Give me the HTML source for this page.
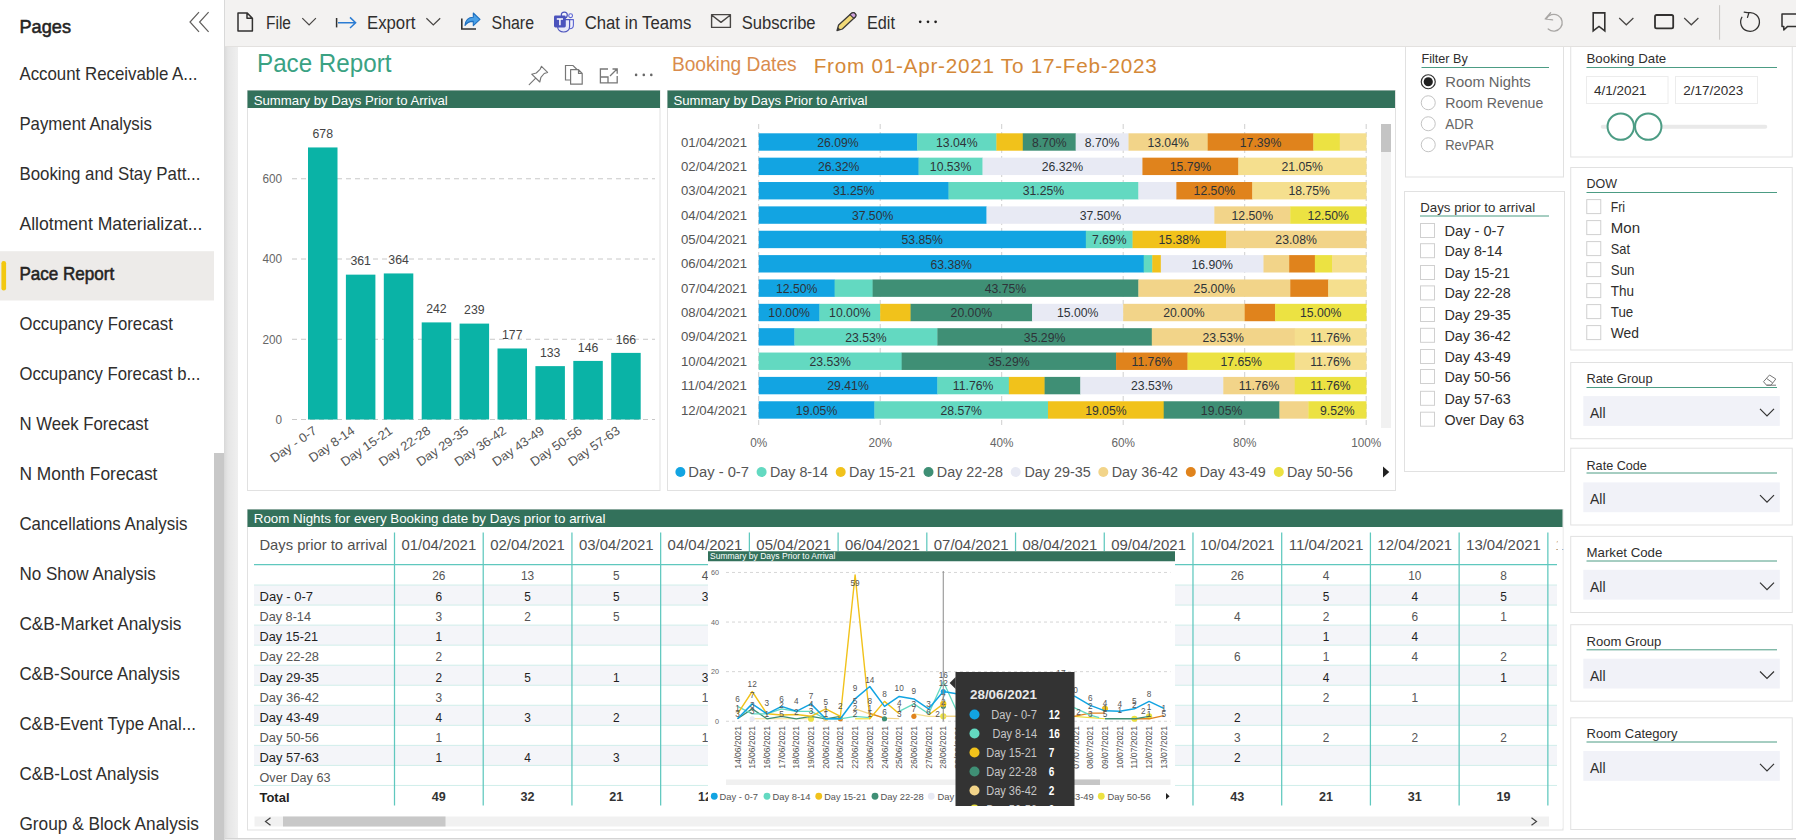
<!DOCTYPE html>
<html lang="en"><head><meta charset="utf-8"><title>Pace Report</title>
<style>
html,body{margin:0;padding:0;background:#fff;overflow:hidden}
svg{display:block;font-family:"Liberation Sans",sans-serif}
text{white-space:pre}
</style></head>
<body>
<svg width="1796" height="840" viewBox="0 0 1796 840" shape-rendering="auto">
<defs><linearGradient id="gut" x1="0" x2="1" y1="0" y2="0"><stop offset="0" stop-color="#dcdcdc"/><stop offset="0.25" stop-color="#e6e6e6"/><stop offset="1" stop-color="#efefef"/></linearGradient><clipPath id="ovl"><rect x="708" y="551" width="467" height="255"/></clipPath></defs>
<rect x="0" y="0" width="1796" height="840" fill="#ffffff"/>
<rect x="225" y="47" width="13" height="793" fill="url(#gut)"/>
<text x="257" y="72" font-size="25.5" fill="#3aa283" textLength="134.5" lengthAdjust="spacingAndGlyphs">Pace Report</text>
<text x="671.9" y="71.2" font-size="20.7" fill="#d98c4d" textLength="124.8" lengthAdjust="spacingAndGlyphs">Booking Dates</text>
<text x="813.7" y="72.7" font-size="20.7" fill="#d48838" textLength="343" lengthAdjust="spacing">From 01-Apr-2021 To 17-Feb-2023</text>
<path d="M541.5 66.3 L547.6 72.4 L544.2 73.5 L540.9 77.4 L539.8 82 L531.7 74.2 L536.3 73 L540 69.4 Z M535.7 78.1 L529.2 84.6" fill="none" stroke="#777777" stroke-width="1.15" stroke-linejoin="round" stroke-linecap="round"/>
<path d="M570.5 80 L565.5 80 L565.5 65.5 L573 65.5 L577 69.5" fill="none" stroke="#777777" stroke-width="1.2"/>
<path d="M570.6 69.7 L578.5 69.7 L582.2 73.4 L582.2 84.2 L570.6 84.2 Z M578.5 69.7 L578.5 73.4 L582.2 73.4" fill="none" stroke="#777777" stroke-width="1.2" stroke-linejoin="round"/>
<path d="M608 69 L600.4 69 L600.4 82.9 L617.2 82.9 L617.2 76 M600.4 77 L608 77 L608 82.9 M610 76 L617 69 M612.5 69 L617.2 69 L617.2 73.7" fill="none" stroke="#777777" stroke-width="1.3"/>
<circle cx="636.1" cy="74.9" r="1.3" fill="#666"/>
<circle cx="643.8" cy="74.9" r="1.3" fill="#666"/>
<circle cx="651.3" cy="74.9" r="1.3" fill="#666"/>
<rect x="247.5" y="90.5" width="412.5" height="400" fill="#ffffff" stroke="#e1e1e1" stroke-width="1"/>
<rect x="247.5" y="90.5" width="412.5" height="17.5" fill="#33715b"/>
<text x="253.75" y="104.8" font-size="13" fill="#ffffff" textLength="194" lengthAdjust="spacingAndGlyphs">Summary by Days Prior to Arrival</text>
<line x1="292" y1="419.5" x2="655" y2="419.5" stroke="#c8c8c8" stroke-width="1" stroke-dasharray="5 4"/>
<text x="282" y="423.9" font-size="12" fill="#666" text-anchor="end" textLength="6.54" lengthAdjust="spacingAndGlyphs">0</text>
<line x1="292" y1="339.25" x2="655" y2="339.25" stroke="#c8c8c8" stroke-width="1" stroke-dasharray="5 4"/>
<text x="282" y="343.65" font-size="12" fill="#666" text-anchor="end" textLength="19.62" lengthAdjust="spacingAndGlyphs">200</text>
<line x1="292" y1="259" x2="655" y2="259" stroke="#c8c8c8" stroke-width="1" stroke-dasharray="5 4"/>
<text x="282" y="263.4" font-size="12" fill="#666" text-anchor="end" textLength="19.62" lengthAdjust="spacingAndGlyphs">400</text>
<line x1="292" y1="178.75" x2="655" y2="178.75" stroke="#c8c8c8" stroke-width="1" stroke-dasharray="5 4"/>
<text x="282" y="183.15" font-size="12" fill="#666" text-anchor="end" textLength="19.62" lengthAdjust="spacingAndGlyphs">600</text>
<rect x="308" y="147.45" width="29.5" height="272.05" fill="#0ab3a6"/>
<text x="322.75" y="138.15" font-size="13" fill="#444" text-anchor="middle" textLength="20.5" lengthAdjust="spacingAndGlyphs">678</text>
<text x="317.75" y="432.5" font-size="12.6" fill="#555" text-anchor="end" textLength="53.37" lengthAdjust="spacingAndGlyphs" transform="rotate(-35 317.75 432.5)">Day - 0-7</text>
<rect x="345.9" y="274.65" width="29.5" height="144.85" fill="#0ab3a6"/>
<text x="360.65" y="265.35" font-size="13" fill="#444" text-anchor="middle" textLength="20.5" lengthAdjust="spacingAndGlyphs">361</text>
<text x="355.65" y="432.5" font-size="12.6" fill="#555" text-anchor="end" textLength="52.66" lengthAdjust="spacingAndGlyphs" transform="rotate(-35 355.65 432.5)">Day 8-14</text>
<rect x="383.8" y="273.44" width="29.5" height="146.06" fill="#0ab3a6"/>
<text x="398.55" y="264.14" font-size="13" fill="#444" text-anchor="middle" textLength="20.5" lengthAdjust="spacingAndGlyphs">364</text>
<text x="393.55" y="432.5" font-size="12.6" fill="#555" text-anchor="end" textLength="59.88" lengthAdjust="spacingAndGlyphs" transform="rotate(-35 393.55 432.5)">Day 15-21</text>
<rect x="421.7" y="322.4" width="29.5" height="97.1" fill="#0ab3a6"/>
<text x="436.45" y="313.1" font-size="13" fill="#444" text-anchor="middle" textLength="20.5" lengthAdjust="spacingAndGlyphs">242</text>
<text x="431.45" y="432.5" font-size="12.6" fill="#555" text-anchor="end" textLength="59.88" lengthAdjust="spacingAndGlyphs" transform="rotate(-35 431.45 432.5)">Day 22-28</text>
<rect x="459.6" y="323.6" width="29.5" height="95.9" fill="#0ab3a6"/>
<text x="474.35" y="314.3" font-size="13" fill="#444" text-anchor="middle" textLength="20.5" lengthAdjust="spacingAndGlyphs">239</text>
<text x="469.35" y="432.5" font-size="12.6" fill="#555" text-anchor="end" textLength="59.88" lengthAdjust="spacingAndGlyphs" transform="rotate(-35 469.35 432.5)">Day 29-35</text>
<rect x="497.5" y="348.48" width="29.5" height="71.02" fill="#0ab3a6"/>
<text x="512.25" y="339.18" font-size="13" fill="#444" text-anchor="middle" textLength="20.5" lengthAdjust="spacingAndGlyphs">177</text>
<text x="507.25" y="432.5" font-size="12.6" fill="#555" text-anchor="end" textLength="59.88" lengthAdjust="spacingAndGlyphs" transform="rotate(-35 507.25 432.5)">Day 36-42</text>
<rect x="535.4" y="366.13" width="29.5" height="53.37" fill="#0ab3a6"/>
<text x="550.15" y="356.83" font-size="13" fill="#444" text-anchor="middle" textLength="20.5" lengthAdjust="spacingAndGlyphs">133</text>
<text x="545.15" y="432.5" font-size="12.6" fill="#555" text-anchor="end" textLength="59.88" lengthAdjust="spacingAndGlyphs" transform="rotate(-35 545.15 432.5)">Day 43-49</text>
<rect x="573.3" y="360.92" width="29.5" height="58.58" fill="#0ab3a6"/>
<text x="588.05" y="351.62" font-size="13" fill="#444" text-anchor="middle" textLength="20.5" lengthAdjust="spacingAndGlyphs">146</text>
<text x="583.05" y="432.5" font-size="12.6" fill="#555" text-anchor="end" textLength="59.88" lengthAdjust="spacingAndGlyphs" transform="rotate(-35 583.05 432.5)">Day 50-56</text>
<rect x="611.2" y="352.89" width="29.5" height="66.61" fill="#0ab3a6"/>
<text x="625.95" y="343.59" font-size="13" fill="#444" text-anchor="middle" textLength="20.5" lengthAdjust="spacingAndGlyphs">166</text>
<text x="620.95" y="432.5" font-size="12.6" fill="#555" text-anchor="end" textLength="59.88" lengthAdjust="spacingAndGlyphs" transform="rotate(-35 620.95 432.5)">Day 57-63</text>
<rect x="667.5" y="90.5" width="728" height="400" fill="#ffffff" stroke="#e1e1e1" stroke-width="1"/>
<rect x="667.5" y="90.5" width="727.5" height="17.5" fill="#33715b"/>
<text x="673.5" y="104.8" font-size="13" fill="#ffffff" textLength="194" lengthAdjust="spacingAndGlyphs">Summary by Days Prior to Arrival</text>
<line x1="758.7" y1="124" x2="758.7" y2="428" stroke="#cfcfcf" stroke-width="1" stroke-dasharray="5 3"/>
<text x="758.7" y="446.7" font-size="12" fill="#666" text-anchor="middle" textLength="17" lengthAdjust="spacingAndGlyphs">0%</text>
<line x1="880.2" y1="124" x2="880.2" y2="428" stroke="#cfcfcf" stroke-width="1" stroke-dasharray="5 3"/>
<text x="880.2" y="446.7" font-size="12" fill="#666" text-anchor="middle" textLength="23.54" lengthAdjust="spacingAndGlyphs">20%</text>
<line x1="1001.7" y1="124" x2="1001.7" y2="428" stroke="#cfcfcf" stroke-width="1" stroke-dasharray="5 3"/>
<text x="1001.7" y="446.7" font-size="12" fill="#666" text-anchor="middle" textLength="23.54" lengthAdjust="spacingAndGlyphs">40%</text>
<line x1="1123.2" y1="124" x2="1123.2" y2="428" stroke="#cfcfcf" stroke-width="1" stroke-dasharray="5 3"/>
<text x="1123.2" y="446.7" font-size="12" fill="#666" text-anchor="middle" textLength="23.54" lengthAdjust="spacingAndGlyphs">60%</text>
<line x1="1244.7" y1="124" x2="1244.7" y2="428" stroke="#cfcfcf" stroke-width="1" stroke-dasharray="5 3"/>
<text x="1244.7" y="446.7" font-size="12" fill="#666" text-anchor="middle" textLength="23.54" lengthAdjust="spacingAndGlyphs">80%</text>
<line x1="1366.2" y1="124" x2="1366.2" y2="428" stroke="#cfcfcf" stroke-width="1" stroke-dasharray="5 3"/>
<text x="1366.2" y="446.7" font-size="12" fill="#666" text-anchor="middle" textLength="30.08" lengthAdjust="spacingAndGlyphs">100%</text>
<text x="681" y="146.6" font-size="13" fill="#555" textLength="66" lengthAdjust="spacingAndGlyphs">01/04/2021</text>
<rect x="758.7" y="133.3" width="158.78" height="17.4" fill="#12a4e2"/>
<text x="837.94" y="146.7" font-size="13" fill="#2e3338" text-anchor="middle" textLength="41.45" lengthAdjust="spacingAndGlyphs">26.09%</text>
<rect x="917.18" y="133.3" width="79.51" height="17.4" fill="#63d9c1"/>
<text x="956.79" y="146.7" font-size="13" fill="#2e3338" text-anchor="middle" textLength="41.45" lengthAdjust="spacingAndGlyphs">13.04%</text>
<rect x="996.39" y="133.3" width="26.72" height="17.4" fill="#f1c21b"/>
<rect x="1022.81" y="133.3" width="53.15" height="17.4" fill="#3f8f75"/>
<text x="1049.24" y="146.7" font-size="13" fill="#2e3338" text-anchor="middle" textLength="34.65" lengthAdjust="spacingAndGlyphs">8.70%</text>
<rect x="1075.66" y="133.3" width="53.15" height="17.4" fill="#e8eaf4"/>
<text x="1102.09" y="146.7" font-size="13" fill="#2e3338" text-anchor="middle" textLength="34.65" lengthAdjust="spacingAndGlyphs">8.70%</text>
<rect x="1128.51" y="133.3" width="79.51" height="17.4" fill="#f2d489"/>
<text x="1168.11" y="146.7" font-size="13" fill="#2e3338" text-anchor="middle" textLength="41.45" lengthAdjust="spacingAndGlyphs">13.04%</text>
<rect x="1207.72" y="133.3" width="105.93" height="17.4" fill="#e0831c"/>
<text x="1260.54" y="146.7" font-size="13" fill="#2e3338" text-anchor="middle" textLength="41.45" lengthAdjust="spacingAndGlyphs">17.39%</text>
<rect x="1313.35" y="133.3" width="26.72" height="17.4" fill="#ece242"/>
<rect x="1339.78" y="133.3" width="26.72" height="17.4" fill="#f5df8e"/>
<text x="681" y="170.96" font-size="13" fill="#555" textLength="66" lengthAdjust="spacingAndGlyphs">02/04/2021</text>
<rect x="758.7" y="157.66" width="160.18" height="17.4" fill="#12a4e2"/>
<text x="838.64" y="171.06" font-size="13" fill="#2e3338" text-anchor="middle" textLength="41.45" lengthAdjust="spacingAndGlyphs">26.32%</text>
<rect x="918.58" y="157.66" width="64.26" height="17.4" fill="#63d9c1"/>
<text x="950.56" y="171.06" font-size="13" fill="#2e3338" text-anchor="middle" textLength="41.45" lengthAdjust="spacingAndGlyphs">10.53%</text>
<rect x="982.54" y="157.66" width="160.18" height="17.4" fill="#e8eaf4"/>
<text x="1062.48" y="171.06" font-size="13" fill="#2e3338" text-anchor="middle" textLength="41.45" lengthAdjust="spacingAndGlyphs">26.32%</text>
<rect x="1142.42" y="157.66" width="96.21" height="17.4" fill="#e0831c"/>
<text x="1190.38" y="171.06" font-size="13" fill="#2e3338" text-anchor="middle" textLength="41.45" lengthAdjust="spacingAndGlyphs">15.79%</text>
<rect x="1238.33" y="157.66" width="128.17" height="17.4" fill="#f5df8e"/>
<text x="1302.27" y="171.06" font-size="13" fill="#2e3338" text-anchor="middle" textLength="41.45" lengthAdjust="spacingAndGlyphs">21.05%</text>
<text x="681" y="195.32" font-size="13" fill="#555" textLength="66" lengthAdjust="spacingAndGlyphs">03/04/2021</text>
<rect x="758.7" y="182.02" width="190.14" height="17.4" fill="#12a4e2"/>
<text x="853.62" y="195.42" font-size="13" fill="#2e3338" text-anchor="middle" textLength="41.45" lengthAdjust="spacingAndGlyphs">31.25%</text>
<rect x="948.54" y="182.02" width="190.14" height="17.4" fill="#63d9c1"/>
<text x="1043.47" y="195.42" font-size="13" fill="#2e3338" text-anchor="middle" textLength="41.45" lengthAdjust="spacingAndGlyphs">31.25%</text>
<rect x="1138.39" y="182.02" width="38.27" height="17.4" fill="#e8eaf4"/>
<rect x="1176.36" y="182.02" width="76.24" height="17.4" fill="#e0831c"/>
<text x="1214.33" y="195.42" font-size="13" fill="#2e3338" text-anchor="middle" textLength="41.45" lengthAdjust="spacingAndGlyphs">12.50%</text>
<rect x="1252.29" y="182.02" width="114.21" height="17.4" fill="#f5df8e"/>
<text x="1309.25" y="195.42" font-size="13" fill="#2e3338" text-anchor="middle" textLength="41.45" lengthAdjust="spacingAndGlyphs">18.75%</text>
<text x="681" y="219.68" font-size="13" fill="#555" textLength="66" lengthAdjust="spacingAndGlyphs">04/04/2021</text>
<rect x="758.7" y="206.38" width="228.11" height="17.4" fill="#12a4e2"/>
<text x="872.61" y="219.78" font-size="13" fill="#2e3338" text-anchor="middle" textLength="41.45" lengthAdjust="spacingAndGlyphs">37.50%</text>
<rect x="986.51" y="206.38" width="228.11" height="17.4" fill="#e8eaf4"/>
<text x="1100.42" y="219.78" font-size="13" fill="#2e3338" text-anchor="middle" textLength="41.45" lengthAdjust="spacingAndGlyphs">37.50%</text>
<rect x="1214.33" y="206.38" width="76.24" height="17.4" fill="#f2d489"/>
<text x="1252.29" y="219.78" font-size="13" fill="#2e3338" text-anchor="middle" textLength="41.45" lengthAdjust="spacingAndGlyphs">12.50%</text>
<rect x="1290.26" y="206.38" width="76.24" height="17.4" fill="#ece242"/>
<text x="1328.23" y="219.78" font-size="13" fill="#2e3338" text-anchor="middle" textLength="41.45" lengthAdjust="spacingAndGlyphs">12.50%</text>
<text x="681" y="244.04" font-size="13" fill="#555" textLength="66" lengthAdjust="spacingAndGlyphs">05/04/2021</text>
<rect x="758.7" y="230.74" width="327.44" height="17.4" fill="#12a4e2"/>
<text x="922.27" y="244.14" font-size="13" fill="#2e3338" text-anchor="middle" textLength="41.45" lengthAdjust="spacingAndGlyphs">53.85%</text>
<rect x="1085.84" y="230.74" width="47.02" height="17.4" fill="#63d9c1"/>
<text x="1109.2" y="244.14" font-size="13" fill="#2e3338" text-anchor="middle" textLength="34.65" lengthAdjust="spacingAndGlyphs">7.69%</text>
<rect x="1132.56" y="230.74" width="93.73" height="17.4" fill="#f1c21b"/>
<text x="1179.27" y="244.14" font-size="13" fill="#2e3338" text-anchor="middle" textLength="41.45" lengthAdjust="spacingAndGlyphs">15.38%</text>
<rect x="1225.99" y="230.74" width="140.51" height="17.4" fill="#f2d489"/>
<text x="1296.09" y="244.14" font-size="13" fill="#2e3338" text-anchor="middle" textLength="41.45" lengthAdjust="spacingAndGlyphs">23.08%</text>
<text x="681" y="268.4" font-size="13" fill="#555" textLength="66" lengthAdjust="spacingAndGlyphs">06/04/2021</text>
<rect x="758.7" y="255.1" width="385.3" height="17.4" fill="#12a4e2"/>
<text x="951.2" y="268.5" font-size="13" fill="#2e3338" text-anchor="middle" textLength="41.45" lengthAdjust="spacingAndGlyphs">63.38%</text>
<rect x="1143.7" y="255.1" width="8.86" height="17.4" fill="#63d9c1"/>
<rect x="1152.26" y="255.1" width="8.86" height="17.4" fill="#f1c21b"/>
<rect x="1160.82" y="255.1" width="102.96" height="17.4" fill="#e8eaf4"/>
<text x="1212.15" y="268.5" font-size="13" fill="#2e3338" text-anchor="middle" textLength="41.45" lengthAdjust="spacingAndGlyphs">16.90%</text>
<rect x="1263.48" y="255.1" width="25.99" height="17.4" fill="#f2d489"/>
<rect x="1289.18" y="255.1" width="25.99" height="17.4" fill="#e0831c"/>
<rect x="1314.87" y="255.1" width="17.43" height="17.4" fill="#ece242"/>
<rect x="1332" y="255.1" width="34.5" height="17.4" fill="#f5df8e"/>
<text x="681" y="292.76" font-size="13" fill="#555" textLength="66" lengthAdjust="spacingAndGlyphs">07/04/2021</text>
<rect x="758.7" y="279.46" width="76.24" height="17.4" fill="#12a4e2"/>
<text x="796.67" y="292.86" font-size="13" fill="#2e3338" text-anchor="middle" textLength="41.45" lengthAdjust="spacingAndGlyphs">12.50%</text>
<rect x="834.64" y="279.46" width="38.27" height="17.4" fill="#63d9c1"/>
<rect x="872.61" y="279.46" width="266.08" height="17.4" fill="#3f8f75"/>
<text x="1005.5" y="292.86" font-size="13" fill="#2e3338" text-anchor="middle" textLength="41.45" lengthAdjust="spacingAndGlyphs">43.75%</text>
<rect x="1138.39" y="279.46" width="152.18" height="17.4" fill="#f2d489"/>
<text x="1214.33" y="292.86" font-size="13" fill="#2e3338" text-anchor="middle" textLength="41.45" lengthAdjust="spacingAndGlyphs">25.00%</text>
<rect x="1290.26" y="279.46" width="38.27" height="17.4" fill="#e0831c"/>
<rect x="1328.23" y="279.46" width="38.27" height="17.4" fill="#f5df8e"/>
<text x="681" y="317.12" font-size="13" fill="#555" textLength="66" lengthAdjust="spacingAndGlyphs">08/04/2021</text>
<rect x="758.7" y="303.82" width="61.05" height="17.4" fill="#12a4e2"/>
<text x="789.08" y="317.22" font-size="13" fill="#2e3338" text-anchor="middle" textLength="41.45" lengthAdjust="spacingAndGlyphs">10.00%</text>
<rect x="819.45" y="303.82" width="61.05" height="17.4" fill="#63d9c1"/>
<text x="849.83" y="317.22" font-size="13" fill="#2e3338" text-anchor="middle" textLength="41.45" lengthAdjust="spacingAndGlyphs">10.00%</text>
<rect x="880.2" y="303.82" width="30.68" height="17.4" fill="#f1c21b"/>
<rect x="910.58" y="303.82" width="121.8" height="17.4" fill="#3f8f75"/>
<text x="971.33" y="317.22" font-size="13" fill="#2e3338" text-anchor="middle" textLength="41.45" lengthAdjust="spacingAndGlyphs">20.00%</text>
<rect x="1032.08" y="303.82" width="91.42" height="17.4" fill="#e8eaf4"/>
<text x="1077.64" y="317.22" font-size="13" fill="#2e3338" text-anchor="middle" textLength="41.45" lengthAdjust="spacingAndGlyphs">15.00%</text>
<rect x="1123.2" y="303.82" width="121.8" height="17.4" fill="#f2d489"/>
<text x="1183.95" y="317.22" font-size="13" fill="#2e3338" text-anchor="middle" textLength="41.45" lengthAdjust="spacingAndGlyphs">20.00%</text>
<rect x="1244.7" y="303.82" width="30.68" height="17.4" fill="#e0831c"/>
<rect x="1275.08" y="303.82" width="91.42" height="17.4" fill="#ece242"/>
<text x="1320.64" y="317.22" font-size="13" fill="#2e3338" text-anchor="middle" textLength="41.45" lengthAdjust="spacingAndGlyphs">15.00%</text>
<text x="681" y="341.48" font-size="13" fill="#555" textLength="66" lengthAdjust="spacingAndGlyphs">09/04/2021</text>
<rect x="758.7" y="328.18" width="36.02" height="17.4" fill="#12a4e2"/>
<rect x="794.42" y="328.18" width="143.26" height="17.4" fill="#63d9c1"/>
<text x="865.9" y="341.58" font-size="13" fill="#2e3338" text-anchor="middle" textLength="41.45" lengthAdjust="spacingAndGlyphs">23.53%</text>
<rect x="937.38" y="328.18" width="214.71" height="17.4" fill="#3f8f75"/>
<text x="1044.59" y="341.58" font-size="13" fill="#2e3338" text-anchor="middle" textLength="41.45" lengthAdjust="spacingAndGlyphs">35.29%</text>
<rect x="1151.79" y="328.18" width="143.26" height="17.4" fill="#f2d489"/>
<text x="1223.27" y="341.58" font-size="13" fill="#2e3338" text-anchor="middle" textLength="41.45" lengthAdjust="spacingAndGlyphs">23.53%</text>
<rect x="1294.75" y="328.18" width="71.75" height="17.4" fill="#f5df8e"/>
<text x="1330.48" y="341.58" font-size="13" fill="#2e3338" text-anchor="middle" textLength="40.54" lengthAdjust="spacingAndGlyphs">11.76%</text>
<text x="681" y="365.84" font-size="13" fill="#555" textLength="66" lengthAdjust="spacingAndGlyphs">10/04/2021</text>
<rect x="758.7" y="352.54" width="143.26" height="17.4" fill="#63d9c1"/>
<text x="830.18" y="365.94" font-size="13" fill="#2e3338" text-anchor="middle" textLength="41.45" lengthAdjust="spacingAndGlyphs">23.53%</text>
<rect x="901.66" y="352.54" width="214.71" height="17.4" fill="#3f8f75"/>
<text x="1008.86" y="365.94" font-size="13" fill="#2e3338" text-anchor="middle" textLength="41.45" lengthAdjust="spacingAndGlyphs">35.29%</text>
<rect x="1116.07" y="352.54" width="71.75" height="17.4" fill="#e0831c"/>
<text x="1151.79" y="365.94" font-size="13" fill="#2e3338" text-anchor="middle" textLength="40.54" lengthAdjust="spacingAndGlyphs">11.76%</text>
<rect x="1187.52" y="352.54" width="107.53" height="17.4" fill="#ece242"/>
<text x="1241.13" y="365.94" font-size="13" fill="#2e3338" text-anchor="middle" textLength="41.45" lengthAdjust="spacingAndGlyphs">17.65%</text>
<rect x="1294.75" y="352.54" width="71.75" height="17.4" fill="#f5df8e"/>
<text x="1330.48" y="365.94" font-size="13" fill="#2e3338" text-anchor="middle" textLength="40.54" lengthAdjust="spacingAndGlyphs">11.76%</text>
<text x="681" y="390.2" font-size="13" fill="#555" textLength="66" lengthAdjust="spacingAndGlyphs">11/04/2021</text>
<rect x="758.7" y="376.9" width="179" height="17.4" fill="#12a4e2"/>
<text x="848.05" y="390.3" font-size="13" fill="#2e3338" text-anchor="middle" textLength="41.45" lengthAdjust="spacingAndGlyphs">29.41%</text>
<rect x="937.4" y="376.9" width="71.76" height="17.4" fill="#63d9c1"/>
<text x="973.13" y="390.3" font-size="13" fill="#2e3338" text-anchor="middle" textLength="40.54" lengthAdjust="spacingAndGlyphs">11.76%</text>
<rect x="1008.86" y="376.9" width="36.03" height="17.4" fill="#f1c21b"/>
<rect x="1044.59" y="376.9" width="36.03" height="17.4" fill="#3f8f75"/>
<rect x="1080.31" y="376.9" width="143.27" height="17.4" fill="#e8eaf4"/>
<text x="1151.8" y="390.3" font-size="13" fill="#2e3338" text-anchor="middle" textLength="41.45" lengthAdjust="spacingAndGlyphs">23.53%</text>
<rect x="1223.29" y="376.9" width="71.76" height="17.4" fill="#f2d489"/>
<text x="1259.02" y="390.3" font-size="13" fill="#2e3338" text-anchor="middle" textLength="40.54" lengthAdjust="spacingAndGlyphs">11.76%</text>
<rect x="1294.74" y="376.9" width="71.76" height="17.4" fill="#ece242"/>
<text x="1330.47" y="390.3" font-size="13" fill="#2e3338" text-anchor="middle" textLength="40.54" lengthAdjust="spacingAndGlyphs">11.76%</text>
<text x="681" y="414.56" font-size="13" fill="#555" textLength="66" lengthAdjust="spacingAndGlyphs">12/04/2021</text>
<rect x="758.7" y="401.26" width="116.03" height="17.4" fill="#12a4e2"/>
<text x="816.56" y="414.66" font-size="13" fill="#2e3338" text-anchor="middle" textLength="41.45" lengthAdjust="spacingAndGlyphs">19.05%</text>
<rect x="874.43" y="401.26" width="173.86" height="17.4" fill="#63d9c1"/>
<text x="961.21" y="414.66" font-size="13" fill="#2e3338" text-anchor="middle" textLength="41.45" lengthAdjust="spacingAndGlyphs">28.57%</text>
<rect x="1047.99" y="401.26" width="116.03" height="17.4" fill="#f1c21b"/>
<text x="1105.86" y="414.66" font-size="13" fill="#2e3338" text-anchor="middle" textLength="41.45" lengthAdjust="spacingAndGlyphs">19.05%</text>
<rect x="1163.72" y="401.26" width="116.03" height="17.4" fill="#3f8f75"/>
<text x="1221.58" y="414.66" font-size="13" fill="#2e3338" text-anchor="middle" textLength="41.45" lengthAdjust="spacingAndGlyphs">19.05%</text>
<rect x="1279.45" y="401.26" width="29.22" height="17.4" fill="#f2d489"/>
<rect x="1308.37" y="401.26" width="58.13" height="17.4" fill="#ece242"/>
<text x="1337.28" y="414.66" font-size="13" fill="#2e3338" text-anchor="middle" textLength="34.65" lengthAdjust="spacingAndGlyphs">9.52%</text>
<rect x="1381" y="124" width="10" height="304" fill="#f1f1f1"/>
<rect x="1381" y="124" width="10" height="28" fill="#c4c4c4"/>
<circle cx="680.4" cy="472" r="5" fill="#12a4e2"/>
<text x="688.3" y="477" font-size="14" fill="#555" textLength="60.7" lengthAdjust="spacingAndGlyphs">Day - 0-7</text>
<circle cx="761.6" cy="472" r="5" fill="#63d9c1"/>
<text x="770" y="477" font-size="14" fill="#555" textLength="58" lengthAdjust="spacingAndGlyphs">Day 8-14</text>
<circle cx="840.7" cy="472" r="5" fill="#f1c21b"/>
<text x="849" y="477" font-size="14" fill="#555" textLength="66.4" lengthAdjust="spacingAndGlyphs">Day 15-21</text>
<circle cx="928.5" cy="472" r="5" fill="#3f8f75"/>
<text x="936.8" y="477" font-size="14" fill="#555" textLength="66.2" lengthAdjust="spacingAndGlyphs">Day 22-28</text>
<circle cx="1015.7" cy="472" r="5" fill="#e8eaf4"/>
<text x="1024.5" y="477" font-size="14" fill="#555" textLength="66.2" lengthAdjust="spacingAndGlyphs">Day 29-35</text>
<circle cx="1103.3" cy="472" r="5" fill="#f2d489"/>
<text x="1111.7" y="477" font-size="14" fill="#555" textLength="66.3" lengthAdjust="spacingAndGlyphs">Day 36-42</text>
<circle cx="1190.8" cy="472" r="5" fill="#e0831c"/>
<text x="1199.4" y="477" font-size="14" fill="#555" textLength="66.3" lengthAdjust="spacingAndGlyphs">Day 43-49</text>
<circle cx="1278.8" cy="472" r="5" fill="#ece242"/>
<text x="1287" y="477" font-size="14" fill="#555" textLength="66" lengthAdjust="spacingAndGlyphs">Day 50-56</text>
<path d="M1383 466.5 L1389.3 472 L1383 477.5 Z" fill="#222"/>
<rect x="1405.5" y="30" width="158" height="147" fill="#ffffff" stroke="#e1e1e1" stroke-width="1"/>
<text x="1421.5" y="63" font-size="13" fill="#2f2e2d" textLength="46.25" lengthAdjust="spacingAndGlyphs">Filter By</text>
<line x1="1421.5" y1="67.5" x2="1549" y2="67.5" stroke="#4c9c84" stroke-width="1"/>
<circle cx="1428.25" cy="81.75" r="7" fill="#ffffff" stroke="#333" stroke-width="1.2"/>
<circle cx="1428.25" cy="81.75" r="4.6" fill="#1f1f1f"/>
<text x="1445.25" y="87.05" font-size="15" fill="#666666" textLength="85.5" lengthAdjust="spacingAndGlyphs">Room Nights</text>
<circle cx="1428.25" cy="102.75" r="7" fill="#ffffff" stroke="#c4c4c4" stroke-width="1"/>
<text x="1445.25" y="108.05" font-size="15" fill="#666666" textLength="98" lengthAdjust="spacingAndGlyphs">Room Revenue</text>
<circle cx="1428.25" cy="123.75" r="7" fill="#ffffff" stroke="#c4c4c4" stroke-width="1"/>
<text x="1445.25" y="129.05" font-size="15" fill="#666666" textLength="28.5" lengthAdjust="spacingAndGlyphs">ADR</text>
<circle cx="1428.25" cy="144.75" r="7" fill="#ffffff" stroke="#c4c4c4" stroke-width="1"/>
<text x="1445.25" y="150.05" font-size="15" fill="#666666" textLength="48.75" lengthAdjust="spacingAndGlyphs">RevPAR</text>
<rect x="1404.5" y="191.5" width="160" height="280" fill="#ffffff" stroke="#e1e1e1" stroke-width="1"/>
<text x="1420.3" y="212" font-size="13" fill="#2f2e2d" textLength="114.8" lengthAdjust="spacingAndGlyphs">Days prior to arrival</text>
<line x1="1420" y1="216" x2="1549" y2="216" stroke="#4c9c84" stroke-width="1"/>
<rect x="1420.5" y="223.5" width="14" height="14" fill="#ffffff" stroke="#d0d0d0" stroke-width="1"/>
<text x="1444.5" y="235.9" font-size="15" fill="#2f2e2d" textLength="60" lengthAdjust="spacingAndGlyphs">Day - 0-7</text>
<rect x="1420.5" y="243.7" width="14" height="14" fill="#ffffff" stroke="#d0d0d0" stroke-width="1"/>
<text x="1444.5" y="256.1" font-size="15" fill="#2f2e2d" textLength="58" lengthAdjust="spacingAndGlyphs">Day 8-14</text>
<rect x="1420.5" y="265.5" width="14" height="14" fill="#ffffff" stroke="#d0d0d0" stroke-width="1"/>
<text x="1444.5" y="277.9" font-size="15" fill="#2f2e2d" textLength="65.5" lengthAdjust="spacingAndGlyphs">Day 15-21</text>
<rect x="1420.5" y="285.9" width="14" height="14" fill="#ffffff" stroke="#d0d0d0" stroke-width="1"/>
<text x="1444.5" y="298.3" font-size="15" fill="#2f2e2d" textLength="66.25" lengthAdjust="spacingAndGlyphs">Day 22-28</text>
<rect x="1420.5" y="307.5" width="14" height="14" fill="#ffffff" stroke="#d0d0d0" stroke-width="1"/>
<text x="1444.5" y="319.9" font-size="15" fill="#2f2e2d" textLength="66.25" lengthAdjust="spacingAndGlyphs">Day 29-35</text>
<rect x="1420.5" y="328.3" width="14" height="14" fill="#ffffff" stroke="#d0d0d0" stroke-width="1"/>
<text x="1444.5" y="340.7" font-size="15" fill="#2f2e2d" textLength="66.25" lengthAdjust="spacingAndGlyphs">Day 36-42</text>
<rect x="1420.5" y="349.5" width="14" height="14" fill="#ffffff" stroke="#d0d0d0" stroke-width="1"/>
<text x="1444.5" y="361.9" font-size="15" fill="#2f2e2d" textLength="66.25" lengthAdjust="spacingAndGlyphs">Day 43-49</text>
<rect x="1420.5" y="369.5" width="14" height="14" fill="#ffffff" stroke="#d0d0d0" stroke-width="1"/>
<text x="1444.5" y="381.9" font-size="15" fill="#2f2e2d" textLength="66.25" lengthAdjust="spacingAndGlyphs">Day 50-56</text>
<rect x="1420.5" y="391.3" width="14" height="14" fill="#ffffff" stroke="#d0d0d0" stroke-width="1"/>
<text x="1444.5" y="403.7" font-size="15" fill="#2f2e2d" textLength="66.25" lengthAdjust="spacingAndGlyphs">Day 57-63</text>
<rect x="1420.5" y="412.2" width="14" height="14" fill="#ffffff" stroke="#d0d0d0" stroke-width="1"/>
<text x="1444.5" y="424.6" font-size="15" fill="#2f2e2d" textLength="79.7" lengthAdjust="spacingAndGlyphs">Over Day 63</text>
<rect x="1570.75" y="30" width="221.5" height="127" fill="#ffffff" stroke="#e1e1e1" stroke-width="1"/>
<text x="1586.5" y="63" font-size="13" fill="#2f2e2d" textLength="79.75" lengthAdjust="spacingAndGlyphs">Booking Date</text>
<line x1="1586.5" y1="67.5" x2="1777" y2="67.5" stroke="#4c9c84" stroke-width="1"/>
<rect x="1586.5" y="76.5" width="81.5" height="27" fill="#ffffff" stroke="#ececec" stroke-width="1"/>
<rect x="1675.5" y="76.5" width="82" height="27" fill="#ffffff" stroke="#ececec" stroke-width="1"/>
<text x="1594" y="95" font-size="13" fill="#2f2e2d" textLength="52.5" lengthAdjust="spacingAndGlyphs">4/1/2021</text>
<text x="1683.25" y="95" font-size="13" fill="#2f2e2d" textLength="60" lengthAdjust="spacingAndGlyphs">2/17/2023</text>
<rect x="1600.75" y="124.75" width="166.5" height="4" fill="#e9e9e9" rx="2"/>
<circle cx="1620.75" cy="126.6" r="13.2" fill="#ffffff" stroke="#4c9c84" stroke-width="2"/>
<circle cx="1648.25" cy="126.6" r="13.2" fill="#ffffff" stroke="#4c9c84" stroke-width="2"/>
<rect x="1570.75" y="167.5" width="221.5" height="182.5" fill="#ffffff" stroke="#e1e1e1" stroke-width="1"/>
<text x="1586.5" y="188" font-size="13" fill="#2f2e2d" textLength="30.5" lengthAdjust="spacingAndGlyphs">DOW</text>
<line x1="1586.5" y1="192.5" x2="1777" y2="192.5" stroke="#4c9c84" stroke-width="1"/>
<rect x="1586.75" y="199.6" width="14" height="14" fill="#ffffff" stroke="#d0d0d0" stroke-width="1"/>
<text x="1610.75" y="212" font-size="15" fill="#2f2e2d" textLength="14.25" lengthAdjust="spacingAndGlyphs">Fri</text>
<rect x="1586.75" y="220.6" width="14" height="14" fill="#ffffff" stroke="#d0d0d0" stroke-width="1"/>
<text x="1610.75" y="233" font-size="15" fill="#2f2e2d" textLength="29.25" lengthAdjust="spacingAndGlyphs">Mon</text>
<rect x="1586.75" y="241.6" width="14" height="14" fill="#ffffff" stroke="#d0d0d0" stroke-width="1"/>
<text x="1610.75" y="254" font-size="15" fill="#2f2e2d" textLength="19.25" lengthAdjust="spacingAndGlyphs">Sat</text>
<rect x="1586.75" y="262.6" width="14" height="14" fill="#ffffff" stroke="#d0d0d0" stroke-width="1"/>
<text x="1610.75" y="275" font-size="15" fill="#2f2e2d" textLength="23.75" lengthAdjust="spacingAndGlyphs">Sun</text>
<rect x="1586.75" y="283.6" width="14" height="14" fill="#ffffff" stroke="#d0d0d0" stroke-width="1"/>
<text x="1610.75" y="296" font-size="15" fill="#2f2e2d" textLength="23.25" lengthAdjust="spacingAndGlyphs">Thu</text>
<rect x="1586.75" y="304.6" width="14" height="14" fill="#ffffff" stroke="#d0d0d0" stroke-width="1"/>
<text x="1610.75" y="317" font-size="15" fill="#2f2e2d" textLength="22.5" lengthAdjust="spacingAndGlyphs">Tue</text>
<rect x="1586.75" y="325.6" width="14" height="14" fill="#ffffff" stroke="#d0d0d0" stroke-width="1"/>
<text x="1610.75" y="338" font-size="15" fill="#2f2e2d" textLength="28.25" lengthAdjust="spacingAndGlyphs">Wed</text>
<rect x="1570.75" y="362.5" width="221.5" height="76.2" fill="#ffffff" stroke="#e1e1e1" stroke-width="1"/>
<text x="1586.5" y="383" font-size="13" fill="#2f2e2d" textLength="66" lengthAdjust="spacingAndGlyphs">Rate Group</text>
<line x1="1586.5" y1="387.5" x2="1777" y2="387.5" stroke="#4c9c84" stroke-width="1"/>
<rect x="1583.3" y="396.1" width="196.5" height="29.8" fill="#f1f2f8"/>
<text x="1590" y="418.1" font-size="15" fill="#2f2e2d" textLength="15.5" lengthAdjust="spacingAndGlyphs">All</text>
<path d="M1760 408.9 L1767 415.9 L1774 408.9" fill="none" stroke="#333" stroke-width="1.2"/>
<rect x="1570.75" y="448.2" width="221.5" height="76.8" fill="#ffffff" stroke="#e1e1e1" stroke-width="1"/>
<text x="1586.5" y="470" font-size="13" fill="#2f2e2d" textLength="60.4" lengthAdjust="spacingAndGlyphs">Rate Code</text>
<line x1="1586.5" y1="473" x2="1777" y2="473" stroke="#4c9c84" stroke-width="1"/>
<rect x="1583.3" y="482.4" width="196.5" height="29.8" fill="#f1f2f8"/>
<text x="1590" y="504.4" font-size="15" fill="#2f2e2d" textLength="15.5" lengthAdjust="spacingAndGlyphs">All</text>
<path d="M1760 495.2 L1767 502.2 L1774 495.2" fill="none" stroke="#333" stroke-width="1.2"/>
<rect x="1570.75" y="536.4" width="221.5" height="76.1" fill="#ffffff" stroke="#e1e1e1" stroke-width="1"/>
<text x="1586.5" y="556.7" font-size="13" fill="#2f2e2d" textLength="75.8" lengthAdjust="spacingAndGlyphs">Market Code</text>
<line x1="1586.5" y1="561" x2="1777" y2="561" stroke="#4c9c84" stroke-width="1"/>
<rect x="1583.3" y="569.8" width="196.5" height="29.8" fill="#f1f2f8"/>
<text x="1590" y="591.8" font-size="15" fill="#2f2e2d" textLength="15.5" lengthAdjust="spacingAndGlyphs">All</text>
<path d="M1760 582.6 L1767 589.6 L1774 582.6" fill="none" stroke="#333" stroke-width="1.2"/>
<rect x="1570.75" y="624.7" width="221.5" height="76.5" fill="#ffffff" stroke="#e1e1e1" stroke-width="1"/>
<text x="1586.5" y="645.7" font-size="13" fill="#2f2e2d" textLength="74.9" lengthAdjust="spacingAndGlyphs">Room Group</text>
<line x1="1586.5" y1="649.8" x2="1777" y2="649.8" stroke="#4c9c84" stroke-width="1"/>
<rect x="1583.3" y="658.7" width="196.5" height="29.8" fill="#f1f2f8"/>
<text x="1590" y="680.7" font-size="15" fill="#2f2e2d" textLength="15.5" lengthAdjust="spacingAndGlyphs">All</text>
<path d="M1760 671.5 L1767 678.5 L1774 671.5" fill="none" stroke="#333" stroke-width="1.2"/>
<rect x="1570.75" y="717.8" width="221.5" height="111.7" fill="#ffffff" stroke="#e1e1e1" stroke-width="1"/>
<text x="1586.5" y="738" font-size="13" fill="#2f2e2d" textLength="91.1" lengthAdjust="spacingAndGlyphs">Room Category</text>
<line x1="1586.5" y1="742" x2="1777" y2="742" stroke="#4c9c84" stroke-width="1"/>
<rect x="1583.3" y="751" width="196.5" height="29.8" fill="#f1f2f8"/>
<text x="1590" y="773" font-size="15" fill="#2f2e2d" textLength="15.5" lengthAdjust="spacingAndGlyphs">All</text>
<path d="M1760 763.8 L1767 770.8 L1774 763.8" fill="none" stroke="#333" stroke-width="1.2"/>
<path d="M1763.5 381.7 L1769.5 375 L1775.8 379 L1771 385.2 L1766.5 385.2 Z M1766.5 378.4 L1772.6 382.8 M1766.5 385.2 L1776 385.2" fill="none" stroke="#777" stroke-width="1" stroke-linejoin="round"/>
<rect x="247.5" y="509.5" width="1315.5" height="320.5" fill="#ffffff" stroke="#e1e1e1" stroke-width="1"/>
<rect x="247.5" y="509.5" width="1315" height="17.5" fill="#33715b"/>
<text x="253.75" y="523.3" font-size="13" fill="#ffffff" textLength="351.75" lengthAdjust="spacingAndGlyphs">Room Nights for every Booking date by Days prior to arrival</text>
<rect x="254" y="585.04" width="1303" height="20.04" fill="#f4f5f9"/>
<rect x="254" y="625.12" width="1303" height="20.04" fill="#f4f5f9"/>
<rect x="254" y="665.2" width="1303" height="20.04" fill="#f4f5f9"/>
<rect x="254" y="705.28" width="1303" height="20.04" fill="#f4f5f9"/>
<rect x="254" y="745.36" width="1303" height="20.04" fill="#f4f5f9"/>
<line x1="254" y1="585.04" x2="1557" y2="585.04" stroke="#d0eeea" stroke-width="1"/>
<line x1="254" y1="605.08" x2="1557" y2="605.08" stroke="#d0eeea" stroke-width="1"/>
<line x1="254" y1="625.12" x2="1557" y2="625.12" stroke="#d0eeea" stroke-width="1"/>
<line x1="254" y1="645.16" x2="1557" y2="645.16" stroke="#d0eeea" stroke-width="1"/>
<line x1="254" y1="665.2" x2="1557" y2="665.2" stroke="#d0eeea" stroke-width="1"/>
<line x1="254" y1="685.24" x2="1557" y2="685.24" stroke="#d0eeea" stroke-width="1"/>
<line x1="254" y1="705.28" x2="1557" y2="705.28" stroke="#d0eeea" stroke-width="1"/>
<line x1="254" y1="725.32" x2="1557" y2="725.32" stroke="#d0eeea" stroke-width="1"/>
<line x1="254" y1="745.36" x2="1557" y2="745.36" stroke="#d0eeea" stroke-width="1"/>
<line x1="254" y1="765.4" x2="1557" y2="765.4" stroke="#d0eeea" stroke-width="1"/>
<line x1="254" y1="785.44" x2="1557" y2="785.44" stroke="#d0eeea" stroke-width="1"/>
<line x1="254" y1="564.5" x2="1557" y2="564.5" stroke="#5fc8be" stroke-width="1.25"/>
<line x1="394.5" y1="532.5" x2="394.5" y2="805.5" stroke="#5fc8be" stroke-width="1.25"/>
<line x1="483.22" y1="532.5" x2="483.22" y2="805.5" stroke="#5fc8be" stroke-width="1.25"/>
<line x1="571.94" y1="532.5" x2="571.94" y2="805.5" stroke="#5fc8be" stroke-width="1.25"/>
<line x1="660.66" y1="532.5" x2="660.66" y2="805.5" stroke="#5fc8be" stroke-width="1.25"/>
<line x1="749.38" y1="532.5" x2="749.38" y2="805.5" stroke="#5fc8be" stroke-width="1.25"/>
<line x1="838.1" y1="532.5" x2="838.1" y2="805.5" stroke="#5fc8be" stroke-width="1.25"/>
<line x1="926.82" y1="532.5" x2="926.82" y2="805.5" stroke="#5fc8be" stroke-width="1.25"/>
<line x1="1015.54" y1="532.5" x2="1015.54" y2="805.5" stroke="#5fc8be" stroke-width="1.25"/>
<line x1="1104.26" y1="532.5" x2="1104.26" y2="805.5" stroke="#5fc8be" stroke-width="1.25"/>
<line x1="1192.98" y1="532.5" x2="1192.98" y2="805.5" stroke="#5fc8be" stroke-width="1.25"/>
<line x1="1281.7" y1="532.5" x2="1281.7" y2="805.5" stroke="#5fc8be" stroke-width="1.25"/>
<line x1="1370.42" y1="532.5" x2="1370.42" y2="805.5" stroke="#5fc8be" stroke-width="1.25"/>
<line x1="1459.14" y1="532.5" x2="1459.14" y2="805.5" stroke="#5fc8be" stroke-width="1.25"/>
<line x1="1547.86" y1="532.5" x2="1547.86" y2="805.5" stroke="#5fc8be" stroke-width="1.25"/>
<text x="259.4" y="550.1" font-size="14.6" fill="#505050" textLength="128" lengthAdjust="spacingAndGlyphs">Days prior to arrival</text>
<text x="401.46" y="550.1" font-size="14.6" fill="#505050" textLength="74.75" lengthAdjust="spacingAndGlyphs">01/04/2021</text>
<text x="438.86" y="580.2" font-size="12.5" fill="#555" text-anchor="middle" textLength="13.2" lengthAdjust="spacingAndGlyphs">26</text>
<text x="438.86" y="601.34" font-size="12.5" fill="#1f1f1f" text-anchor="middle" textLength="6.6" lengthAdjust="spacingAndGlyphs">6</text>
<text x="438.86" y="621.38" font-size="12.5" fill="#555" text-anchor="middle" textLength="6.6" lengthAdjust="spacingAndGlyphs">3</text>
<text x="438.86" y="641.42" font-size="12.5" fill="#1f1f1f" text-anchor="middle" textLength="6.6" lengthAdjust="spacingAndGlyphs">1</text>
<text x="438.86" y="661.46" font-size="12.5" fill="#555" text-anchor="middle" textLength="6.6" lengthAdjust="spacingAndGlyphs">2</text>
<text x="438.86" y="681.5" font-size="12.5" fill="#1f1f1f" text-anchor="middle" textLength="6.6" lengthAdjust="spacingAndGlyphs">2</text>
<text x="438.86" y="701.54" font-size="12.5" fill="#555" text-anchor="middle" textLength="6.6" lengthAdjust="spacingAndGlyphs">3</text>
<text x="438.86" y="721.58" font-size="12.5" fill="#1f1f1f" text-anchor="middle" textLength="6.6" lengthAdjust="spacingAndGlyphs">4</text>
<text x="438.86" y="741.62" font-size="12.5" fill="#555" text-anchor="middle" textLength="6.6" lengthAdjust="spacingAndGlyphs">1</text>
<text x="438.86" y="761.66" font-size="12.5" fill="#1f1f1f" text-anchor="middle" textLength="6.6" lengthAdjust="spacingAndGlyphs">1</text>
<text x="438.86" y="801.04" font-size="12.5" fill="#333" font-weight="700" text-anchor="middle" textLength="14" lengthAdjust="spacingAndGlyphs">49</text>
<text x="490.18" y="550.1" font-size="14.6" fill="#505050" textLength="74.75" lengthAdjust="spacingAndGlyphs">02/04/2021</text>
<text x="527.58" y="580.2" font-size="12.5" fill="#555" text-anchor="middle" textLength="13.2" lengthAdjust="spacingAndGlyphs">13</text>
<text x="527.58" y="601.34" font-size="12.5" fill="#1f1f1f" text-anchor="middle" textLength="6.6" lengthAdjust="spacingAndGlyphs">5</text>
<text x="527.58" y="621.38" font-size="12.5" fill="#555" text-anchor="middle" textLength="6.6" lengthAdjust="spacingAndGlyphs">2</text>
<text x="527.58" y="681.5" font-size="12.5" fill="#1f1f1f" text-anchor="middle" textLength="6.6" lengthAdjust="spacingAndGlyphs">5</text>
<text x="527.58" y="721.58" font-size="12.5" fill="#1f1f1f" text-anchor="middle" textLength="6.6" lengthAdjust="spacingAndGlyphs">3</text>
<text x="527.58" y="761.66" font-size="12.5" fill="#1f1f1f" text-anchor="middle" textLength="6.6" lengthAdjust="spacingAndGlyphs">4</text>
<text x="527.58" y="801.04" font-size="12.5" fill="#333" font-weight="700" text-anchor="middle" textLength="14" lengthAdjust="spacingAndGlyphs">32</text>
<text x="578.9" y="550.1" font-size="14.6" fill="#505050" textLength="74.75" lengthAdjust="spacingAndGlyphs">03/04/2021</text>
<text x="616.3" y="580.2" font-size="12.5" fill="#555" text-anchor="middle" textLength="6.6" lengthAdjust="spacingAndGlyphs">5</text>
<text x="616.3" y="601.34" font-size="12.5" fill="#1f1f1f" text-anchor="middle" textLength="6.6" lengthAdjust="spacingAndGlyphs">5</text>
<text x="616.3" y="621.38" font-size="12.5" fill="#555" text-anchor="middle" textLength="6.6" lengthAdjust="spacingAndGlyphs">5</text>
<text x="616.3" y="681.5" font-size="12.5" fill="#1f1f1f" text-anchor="middle" textLength="6.6" lengthAdjust="spacingAndGlyphs">1</text>
<text x="616.3" y="721.58" font-size="12.5" fill="#1f1f1f" text-anchor="middle" textLength="6.6" lengthAdjust="spacingAndGlyphs">2</text>
<text x="616.3" y="761.66" font-size="12.5" fill="#1f1f1f" text-anchor="middle" textLength="6.6" lengthAdjust="spacingAndGlyphs">3</text>
<text x="616.3" y="801.04" font-size="12.5" fill="#333" font-weight="700" text-anchor="middle" textLength="14" lengthAdjust="spacingAndGlyphs">21</text>
<text x="667.62" y="550.1" font-size="14.6" fill="#505050" textLength="74.75" lengthAdjust="spacingAndGlyphs">04/04/2021</text>
<text x="705.02" y="580.2" font-size="12.5" fill="#555" text-anchor="middle" textLength="6.6" lengthAdjust="spacingAndGlyphs">4</text>
<text x="705.02" y="601.34" font-size="12.5" fill="#1f1f1f" text-anchor="middle" textLength="6.6" lengthAdjust="spacingAndGlyphs">3</text>
<text x="705.02" y="681.5" font-size="12.5" fill="#1f1f1f" text-anchor="middle" textLength="6.6" lengthAdjust="spacingAndGlyphs">3</text>
<text x="705.02" y="701.54" font-size="12.5" fill="#555" text-anchor="middle" textLength="6.6" lengthAdjust="spacingAndGlyphs">1</text>
<text x="705.02" y="741.62" font-size="12.5" fill="#555" text-anchor="middle" textLength="6.6" lengthAdjust="spacingAndGlyphs">1</text>
<text x="705.02" y="801.04" font-size="12.5" fill="#333" font-weight="700" text-anchor="middle" textLength="14" lengthAdjust="spacingAndGlyphs">12</text>
<text x="756.34" y="550.1" font-size="14.6" fill="#505050" textLength="74.75" lengthAdjust="spacingAndGlyphs">05/04/2021</text>
<text x="793.74" y="580.2" font-size="12.5" fill="#555" text-anchor="middle" textLength="13.2" lengthAdjust="spacingAndGlyphs">13</text>
<text x="793.74" y="601.34" font-size="12.5" fill="#1f1f1f" text-anchor="middle" textLength="6.6" lengthAdjust="spacingAndGlyphs">7</text>
<text x="793.74" y="621.38" font-size="12.5" fill="#555" text-anchor="middle" textLength="6.6" lengthAdjust="spacingAndGlyphs">1</text>
<text x="793.74" y="641.42" font-size="12.5" fill="#1f1f1f" text-anchor="middle" textLength="6.6" lengthAdjust="spacingAndGlyphs">2</text>
<text x="793.74" y="701.54" font-size="12.5" fill="#555" text-anchor="middle" textLength="6.6" lengthAdjust="spacingAndGlyphs">3</text>
<text x="793.74" y="801.04" font-size="12.5" fill="#333" font-weight="700" text-anchor="middle" textLength="14" lengthAdjust="spacingAndGlyphs">26</text>
<text x="845.06" y="550.1" font-size="14.6" fill="#505050" textLength="74.75" lengthAdjust="spacingAndGlyphs">06/04/2021</text>
<text x="882.46" y="580.2" font-size="12.5" fill="#555" text-anchor="middle" textLength="13.2" lengthAdjust="spacingAndGlyphs">71</text>
<text x="882.46" y="601.34" font-size="12.5" fill="#1f1f1f" text-anchor="middle" textLength="13.2" lengthAdjust="spacingAndGlyphs">45</text>
<text x="882.46" y="621.38" font-size="12.5" fill="#555" text-anchor="middle" textLength="6.6" lengthAdjust="spacingAndGlyphs">1</text>
<text x="882.46" y="641.42" font-size="12.5" fill="#1f1f1f" text-anchor="middle" textLength="6.6" lengthAdjust="spacingAndGlyphs">1</text>
<text x="882.46" y="681.5" font-size="12.5" fill="#1f1f1f" text-anchor="middle" textLength="13.2" lengthAdjust="spacingAndGlyphs">12</text>
<text x="882.46" y="701.54" font-size="12.5" fill="#555" text-anchor="middle" textLength="6.6" lengthAdjust="spacingAndGlyphs">3</text>
<text x="882.46" y="721.58" font-size="12.5" fill="#1f1f1f" text-anchor="middle" textLength="6.6" lengthAdjust="spacingAndGlyphs">3</text>
<text x="882.46" y="741.62" font-size="12.5" fill="#555" text-anchor="middle" textLength="6.6" lengthAdjust="spacingAndGlyphs">2</text>
<text x="882.46" y="761.66" font-size="12.5" fill="#1f1f1f" text-anchor="middle" textLength="6.6" lengthAdjust="spacingAndGlyphs">4</text>
<text x="882.46" y="801.04" font-size="12.5" fill="#333" font-weight="700" text-anchor="middle" textLength="21" lengthAdjust="spacingAndGlyphs">142</text>
<text x="933.78" y="550.1" font-size="14.6" fill="#505050" textLength="74.75" lengthAdjust="spacingAndGlyphs">07/04/2021</text>
<text x="971.18" y="580.2" font-size="12.5" fill="#555" text-anchor="middle" textLength="13.2" lengthAdjust="spacingAndGlyphs">16</text>
<text x="971.18" y="601.34" font-size="12.5" fill="#1f1f1f" text-anchor="middle" textLength="6.6" lengthAdjust="spacingAndGlyphs">2</text>
<text x="971.18" y="621.38" font-size="12.5" fill="#555" text-anchor="middle" textLength="6.6" lengthAdjust="spacingAndGlyphs">1</text>
<text x="971.18" y="661.46" font-size="12.5" fill="#555" text-anchor="middle" textLength="6.6" lengthAdjust="spacingAndGlyphs">7</text>
<text x="971.18" y="701.54" font-size="12.5" fill="#555" text-anchor="middle" textLength="6.6" lengthAdjust="spacingAndGlyphs">4</text>
<text x="971.18" y="721.58" font-size="12.5" fill="#1f1f1f" text-anchor="middle" textLength="6.6" lengthAdjust="spacingAndGlyphs">1</text>
<text x="971.18" y="761.66" font-size="12.5" fill="#1f1f1f" text-anchor="middle" textLength="6.6" lengthAdjust="spacingAndGlyphs">1</text>
<text x="971.18" y="801.04" font-size="12.5" fill="#333" font-weight="700" text-anchor="middle" textLength="14" lengthAdjust="spacingAndGlyphs">32</text>
<text x="1022.5" y="550.1" font-size="14.6" fill="#505050" textLength="74.75" lengthAdjust="spacingAndGlyphs">08/04/2021</text>
<text x="1059.9" y="580.2" font-size="12.5" fill="#555" text-anchor="middle" textLength="13.2" lengthAdjust="spacingAndGlyphs">20</text>
<text x="1059.9" y="601.34" font-size="12.5" fill="#1f1f1f" text-anchor="middle" textLength="6.6" lengthAdjust="spacingAndGlyphs">2</text>
<text x="1059.9" y="621.38" font-size="12.5" fill="#555" text-anchor="middle" textLength="6.6" lengthAdjust="spacingAndGlyphs">2</text>
<text x="1059.9" y="641.42" font-size="12.5" fill="#1f1f1f" text-anchor="middle" textLength="6.6" lengthAdjust="spacingAndGlyphs">1</text>
<text x="1059.9" y="661.46" font-size="12.5" fill="#555" text-anchor="middle" textLength="6.6" lengthAdjust="spacingAndGlyphs">4</text>
<text x="1059.9" y="681.5" font-size="12.5" fill="#1f1f1f" text-anchor="middle" textLength="6.6" lengthAdjust="spacingAndGlyphs">3</text>
<text x="1059.9" y="701.54" font-size="12.5" fill="#555" text-anchor="middle" textLength="6.6" lengthAdjust="spacingAndGlyphs">4</text>
<text x="1059.9" y="721.58" font-size="12.5" fill="#1f1f1f" text-anchor="middle" textLength="6.6" lengthAdjust="spacingAndGlyphs">1</text>
<text x="1059.9" y="741.62" font-size="12.5" fill="#555" text-anchor="middle" textLength="6.6" lengthAdjust="spacingAndGlyphs">3</text>
<text x="1059.9" y="801.04" font-size="12.5" fill="#333" font-weight="700" text-anchor="middle" textLength="14" lengthAdjust="spacingAndGlyphs">40</text>
<text x="1111.22" y="550.1" font-size="14.6" fill="#505050" textLength="74.75" lengthAdjust="spacingAndGlyphs">09/04/2021</text>
<text x="1148.62" y="580.2" font-size="12.5" fill="#555" text-anchor="middle" textLength="13.2" lengthAdjust="spacingAndGlyphs">17</text>
<text x="1148.62" y="601.34" font-size="12.5" fill="#1f1f1f" text-anchor="middle" textLength="6.6" lengthAdjust="spacingAndGlyphs">1</text>
<text x="1148.62" y="621.38" font-size="12.5" fill="#555" text-anchor="middle" textLength="6.6" lengthAdjust="spacingAndGlyphs">4</text>
<text x="1148.62" y="661.46" font-size="12.5" fill="#555" text-anchor="middle" textLength="6.6" lengthAdjust="spacingAndGlyphs">6</text>
<text x="1148.62" y="701.54" font-size="12.5" fill="#555" text-anchor="middle" textLength="6.6" lengthAdjust="spacingAndGlyphs">4</text>
<text x="1148.62" y="761.66" font-size="12.5" fill="#1f1f1f" text-anchor="middle" textLength="6.6" lengthAdjust="spacingAndGlyphs">2</text>
<text x="1148.62" y="801.04" font-size="12.5" fill="#333" font-weight="700" text-anchor="middle" textLength="14" lengthAdjust="spacingAndGlyphs">34</text>
<text x="1199.94" y="550.1" font-size="14.6" fill="#505050" textLength="74.75" lengthAdjust="spacingAndGlyphs">10/04/2021</text>
<text x="1237.34" y="580.2" font-size="12.5" fill="#555" text-anchor="middle" textLength="13.2" lengthAdjust="spacingAndGlyphs">26</text>
<text x="1237.34" y="621.38" font-size="12.5" fill="#555" text-anchor="middle" textLength="6.6" lengthAdjust="spacingAndGlyphs">4</text>
<text x="1237.34" y="661.46" font-size="12.5" fill="#555" text-anchor="middle" textLength="6.6" lengthAdjust="spacingAndGlyphs">6</text>
<text x="1237.34" y="721.58" font-size="12.5" fill="#1f1f1f" text-anchor="middle" textLength="6.6" lengthAdjust="spacingAndGlyphs">2</text>
<text x="1237.34" y="741.62" font-size="12.5" fill="#555" text-anchor="middle" textLength="6.6" lengthAdjust="spacingAndGlyphs">3</text>
<text x="1237.34" y="761.66" font-size="12.5" fill="#1f1f1f" text-anchor="middle" textLength="6.6" lengthAdjust="spacingAndGlyphs">2</text>
<text x="1237.34" y="801.04" font-size="12.5" fill="#333" font-weight="700" text-anchor="middle" textLength="14" lengthAdjust="spacingAndGlyphs">43</text>
<text x="1288.66" y="550.1" font-size="14.6" fill="#505050" textLength="74.75" lengthAdjust="spacingAndGlyphs">11/04/2021</text>
<text x="1326.06" y="580.2" font-size="12.5" fill="#555" text-anchor="middle" textLength="6.6" lengthAdjust="spacingAndGlyphs">4</text>
<text x="1326.06" y="601.34" font-size="12.5" fill="#1f1f1f" text-anchor="middle" textLength="6.6" lengthAdjust="spacingAndGlyphs">5</text>
<text x="1326.06" y="621.38" font-size="12.5" fill="#555" text-anchor="middle" textLength="6.6" lengthAdjust="spacingAndGlyphs">2</text>
<text x="1326.06" y="641.42" font-size="12.5" fill="#1f1f1f" text-anchor="middle" textLength="6.6" lengthAdjust="spacingAndGlyphs">1</text>
<text x="1326.06" y="661.46" font-size="12.5" fill="#555" text-anchor="middle" textLength="6.6" lengthAdjust="spacingAndGlyphs">1</text>
<text x="1326.06" y="681.5" font-size="12.5" fill="#1f1f1f" text-anchor="middle" textLength="6.6" lengthAdjust="spacingAndGlyphs">4</text>
<text x="1326.06" y="701.54" font-size="12.5" fill="#555" text-anchor="middle" textLength="6.6" lengthAdjust="spacingAndGlyphs">2</text>
<text x="1326.06" y="741.62" font-size="12.5" fill="#555" text-anchor="middle" textLength="6.6" lengthAdjust="spacingAndGlyphs">2</text>
<text x="1326.06" y="801.04" font-size="12.5" fill="#333" font-weight="700" text-anchor="middle" textLength="14" lengthAdjust="spacingAndGlyphs">21</text>
<text x="1377.38" y="550.1" font-size="14.6" fill="#505050" textLength="74.75" lengthAdjust="spacingAndGlyphs">12/04/2021</text>
<text x="1414.78" y="580.2" font-size="12.5" fill="#555" text-anchor="middle" textLength="13.2" lengthAdjust="spacingAndGlyphs">10</text>
<text x="1414.78" y="601.34" font-size="12.5" fill="#1f1f1f" text-anchor="middle" textLength="6.6" lengthAdjust="spacingAndGlyphs">4</text>
<text x="1414.78" y="621.38" font-size="12.5" fill="#555" text-anchor="middle" textLength="6.6" lengthAdjust="spacingAndGlyphs">6</text>
<text x="1414.78" y="641.42" font-size="12.5" fill="#1f1f1f" text-anchor="middle" textLength="6.6" lengthAdjust="spacingAndGlyphs">4</text>
<text x="1414.78" y="661.46" font-size="12.5" fill="#555" text-anchor="middle" textLength="6.6" lengthAdjust="spacingAndGlyphs">4</text>
<text x="1414.78" y="701.54" font-size="12.5" fill="#555" text-anchor="middle" textLength="6.6" lengthAdjust="spacingAndGlyphs">1</text>
<text x="1414.78" y="741.62" font-size="12.5" fill="#555" text-anchor="middle" textLength="6.6" lengthAdjust="spacingAndGlyphs">2</text>
<text x="1414.78" y="801.04" font-size="12.5" fill="#333" font-weight="700" text-anchor="middle" textLength="14" lengthAdjust="spacingAndGlyphs">31</text>
<text x="1466.1" y="550.1" font-size="14.6" fill="#505050" textLength="74.75" lengthAdjust="spacingAndGlyphs">13/04/2021</text>
<text x="1503.5" y="580.2" font-size="12.5" fill="#555" text-anchor="middle" textLength="6.6" lengthAdjust="spacingAndGlyphs">8</text>
<text x="1503.5" y="601.34" font-size="12.5" fill="#1f1f1f" text-anchor="middle" textLength="6.6" lengthAdjust="spacingAndGlyphs">5</text>
<text x="1503.5" y="621.38" font-size="12.5" fill="#555" text-anchor="middle" textLength="6.6" lengthAdjust="spacingAndGlyphs">1</text>
<text x="1503.5" y="661.46" font-size="12.5" fill="#555" text-anchor="middle" textLength="6.6" lengthAdjust="spacingAndGlyphs">2</text>
<text x="1503.5" y="681.5" font-size="12.5" fill="#1f1f1f" text-anchor="middle" textLength="6.6" lengthAdjust="spacingAndGlyphs">1</text>
<text x="1503.5" y="741.62" font-size="12.5" fill="#555" text-anchor="middle" textLength="6.6" lengthAdjust="spacingAndGlyphs">2</text>
<text x="1503.5" y="801.04" font-size="12.5" fill="#333" font-weight="700" text-anchor="middle" textLength="14" lengthAdjust="spacingAndGlyphs">19</text>
<text x="1555.6" y="550.1" font-size="14.6" fill="#555">1</text>
<text x="259.5" y="601.34" font-size="12.8" fill="#1f1f1f" textLength="53.5" lengthAdjust="spacingAndGlyphs">Day - 0-7</text>
<text x="259.5" y="621.38" font-size="12.8" fill="#555" textLength="51.5" lengthAdjust="spacingAndGlyphs">Day 8-14</text>
<text x="259.5" y="641.42" font-size="12.8" fill="#1f1f1f" textLength="58.5" lengthAdjust="spacingAndGlyphs">Day 15-21</text>
<text x="259.5" y="661.46" font-size="12.8" fill="#555" textLength="59.5" lengthAdjust="spacingAndGlyphs">Day 22-28</text>
<text x="259.5" y="681.5" font-size="12.8" fill="#1f1f1f" textLength="59.5" lengthAdjust="spacingAndGlyphs">Day 29-35</text>
<text x="259.5" y="701.54" font-size="12.8" fill="#555" textLength="59.5" lengthAdjust="spacingAndGlyphs">Day 36-42</text>
<text x="259.5" y="721.58" font-size="12.8" fill="#1f1f1f" textLength="59.5" lengthAdjust="spacingAndGlyphs">Day 43-49</text>
<text x="259.5" y="741.62" font-size="12.8" fill="#555" textLength="59.5" lengthAdjust="spacingAndGlyphs">Day 50-56</text>
<text x="259.5" y="761.66" font-size="12.8" fill="#1f1f1f" textLength="59.5" lengthAdjust="spacingAndGlyphs">Day 57-63</text>
<text x="259.5" y="781.7" font-size="12.8" fill="#555" textLength="71" lengthAdjust="spacingAndGlyphs">Over Day 63</text>
<text x="259.5" y="801.64" font-size="13" fill="#1f1f1f" font-weight="700" textLength="30" lengthAdjust="spacingAndGlyphs">Total</text>
<rect x="1557.5" y="528" width="5" height="300" fill="#ffffff"/>
<rect x="254.5" y="816.5" width="1294.5" height="10" fill="#f1f1f1"/>
<rect x="283" y="816.5" width="162.5" height="10" fill="#c8c8c8"/>
<path d="M270.5 817.8 L265.5 821.5 L270.5 825.2" fill="none" stroke="#444" stroke-width="1.2"/>
<path d="M1531.5 817.8 L1536.5 821.5 L1531.5 825.2" fill="none" stroke="#444" stroke-width="1.2"/>
<g clip-path="url(#ovl)">
<rect x="708" y="551" width="467" height="255" fill="#ffffff"/>
<rect x="708" y="551.25" width="467" height="10" fill="#33715b"/>
<text x="710" y="559" font-size="8.5" fill="#ffffff" textLength="125.5" lengthAdjust="spacingAndGlyphs">Summary by Days Prior to Arrival</text>
<line x1="726" y1="721.25" x2="1170.5" y2="721.25" stroke="#d6d6d6" stroke-width="1" stroke-dasharray="3 3"/>
<text x="719" y="723.85" font-size="7.2" fill="#666" text-anchor="end">0</text>
<line x1="726" y1="671.65" x2="1170.5" y2="671.65" stroke="#d6d6d6" stroke-width="1" stroke-dasharray="3 3"/>
<text x="719" y="674.25" font-size="7.2" fill="#666" text-anchor="end">20</text>
<line x1="726" y1="622.05" x2="1170.5" y2="622.05" stroke="#d6d6d6" stroke-width="1" stroke-dasharray="3 3"/>
<text x="719" y="624.65" font-size="7.2" fill="#666" text-anchor="end">40</text>
<line x1="726" y1="572.45" x2="1170.5" y2="572.45" stroke="#d6d6d6" stroke-width="1" stroke-dasharray="3 3"/>
<text x="719" y="575.05" font-size="7.2" fill="#666" text-anchor="end">60</text>
<text x="740.5" y="726" font-size="8.6" fill="#555" text-anchor="end" textLength="42.75" lengthAdjust="spacingAndGlyphs" transform="rotate(-90 740.5 726)">14/06/2021</text>
<text x="755.2" y="726" font-size="8.6" fill="#555" text-anchor="end" textLength="42.75" lengthAdjust="spacingAndGlyphs" transform="rotate(-90 755.2 726)">15/06/2021</text>
<text x="769.9" y="726" font-size="8.6" fill="#555" text-anchor="end" textLength="42.75" lengthAdjust="spacingAndGlyphs" transform="rotate(-90 769.9 726)">16/06/2021</text>
<text x="784.6" y="726" font-size="8.6" fill="#555" text-anchor="end" textLength="42.75" lengthAdjust="spacingAndGlyphs" transform="rotate(-90 784.6 726)">17/06/2021</text>
<text x="799.3" y="726" font-size="8.6" fill="#555" text-anchor="end" textLength="42.75" lengthAdjust="spacingAndGlyphs" transform="rotate(-90 799.3 726)">18/06/2021</text>
<text x="814" y="726" font-size="8.6" fill="#555" text-anchor="end" textLength="42.75" lengthAdjust="spacingAndGlyphs" transform="rotate(-90 814 726)">19/06/2021</text>
<text x="828.7" y="726" font-size="8.6" fill="#555" text-anchor="end" textLength="42.75" lengthAdjust="spacingAndGlyphs" transform="rotate(-90 828.7 726)">20/06/2021</text>
<text x="843.4" y="726" font-size="8.6" fill="#555" text-anchor="end" textLength="42.75" lengthAdjust="spacingAndGlyphs" transform="rotate(-90 843.4 726)">21/06/2021</text>
<text x="858.1" y="726" font-size="8.6" fill="#555" text-anchor="end" textLength="42.75" lengthAdjust="spacingAndGlyphs" transform="rotate(-90 858.1 726)">22/06/2021</text>
<text x="872.8" y="726" font-size="8.6" fill="#555" text-anchor="end" textLength="42.75" lengthAdjust="spacingAndGlyphs" transform="rotate(-90 872.8 726)">23/06/2021</text>
<text x="887.5" y="726" font-size="8.6" fill="#555" text-anchor="end" textLength="42.75" lengthAdjust="spacingAndGlyphs" transform="rotate(-90 887.5 726)">24/06/2021</text>
<text x="902.2" y="726" font-size="8.6" fill="#555" text-anchor="end" textLength="42.75" lengthAdjust="spacingAndGlyphs" transform="rotate(-90 902.2 726)">25/06/2021</text>
<text x="916.9" y="726" font-size="8.6" fill="#555" text-anchor="end" textLength="42.75" lengthAdjust="spacingAndGlyphs" transform="rotate(-90 916.9 726)">26/06/2021</text>
<text x="931.6" y="726" font-size="8.6" fill="#555" text-anchor="end" textLength="42.75" lengthAdjust="spacingAndGlyphs" transform="rotate(-90 931.6 726)">27/06/2021</text>
<text x="946.3" y="726" font-size="8.6" fill="#555" text-anchor="end" textLength="42.75" lengthAdjust="spacingAndGlyphs" transform="rotate(-90 946.3 726)">28/06/2021</text>
<text x="961" y="726" font-size="8.6" fill="#555" text-anchor="end" textLength="42.75" lengthAdjust="spacingAndGlyphs" transform="rotate(-90 961 726)">29/06/2021</text>
<text x="975.7" y="726" font-size="8.6" fill="#555" text-anchor="end" textLength="42.75" lengthAdjust="spacingAndGlyphs" transform="rotate(-90 975.7 726)">30/06/2021</text>
<text x="990.4" y="726" font-size="8.6" fill="#555" text-anchor="end" textLength="42.75" lengthAdjust="spacingAndGlyphs" transform="rotate(-90 990.4 726)">01/07/2021</text>
<text x="1005.1" y="726" font-size="8.6" fill="#555" text-anchor="end" textLength="42.75" lengthAdjust="spacingAndGlyphs" transform="rotate(-90 1005.1 726)">02/07/2021</text>
<text x="1019.8" y="726" font-size="8.6" fill="#555" text-anchor="end" textLength="42.75" lengthAdjust="spacingAndGlyphs" transform="rotate(-90 1019.8 726)">03/07/2021</text>
<text x="1034.5" y="726" font-size="8.6" fill="#555" text-anchor="end" textLength="42.75" lengthAdjust="spacingAndGlyphs" transform="rotate(-90 1034.5 726)">04/07/2021</text>
<text x="1049.2" y="726" font-size="8.6" fill="#555" text-anchor="end" textLength="42.75" lengthAdjust="spacingAndGlyphs" transform="rotate(-90 1049.2 726)">05/07/2021</text>
<text x="1063.9" y="726" font-size="8.6" fill="#555" text-anchor="end" textLength="42.75" lengthAdjust="spacingAndGlyphs" transform="rotate(-90 1063.9 726)">06/07/2021</text>
<text x="1078.6" y="726" font-size="8.6" fill="#555" text-anchor="end" textLength="42.75" lengthAdjust="spacingAndGlyphs" transform="rotate(-90 1078.6 726)">07/07/2021</text>
<text x="1093.3" y="726" font-size="8.6" fill="#555" text-anchor="end" textLength="42.75" lengthAdjust="spacingAndGlyphs" transform="rotate(-90 1093.3 726)">08/07/2021</text>
<text x="1108" y="726" font-size="8.6" fill="#555" text-anchor="end" textLength="42.75" lengthAdjust="spacingAndGlyphs" transform="rotate(-90 1108 726)">09/07/2021</text>
<text x="1122.7" y="726" font-size="8.6" fill="#555" text-anchor="end" textLength="42.75" lengthAdjust="spacingAndGlyphs" transform="rotate(-90 1122.7 726)">10/07/2021</text>
<text x="1137.4" y="726" font-size="8.6" fill="#555" text-anchor="end" textLength="42.75" lengthAdjust="spacingAndGlyphs" transform="rotate(-90 1137.4 726)">11/07/2021</text>
<text x="1152.1" y="726" font-size="8.6" fill="#555" text-anchor="end" textLength="42.75" lengthAdjust="spacingAndGlyphs" transform="rotate(-90 1152.1 726)">12/07/2021</text>
<text x="1166.8" y="726" font-size="8.6" fill="#555" text-anchor="end" textLength="42.75" lengthAdjust="spacingAndGlyphs" transform="rotate(-90 1166.8 726)">13/07/2021</text>
<path d="M752.2 718.77 L766.9 718.77 L781.6 718.77 L796.3 718.77 L811 718.77" fill="none" stroke="#f5df8e" stroke-width="1.2" stroke-linejoin="round"/>
<path d="M913.9 713.81 L928.6 716.29 L943.3 716.29 L958 716.29" fill="none" stroke="#f5df8e" stroke-width="1.2" stroke-linejoin="round"/>
<path d="M855.1 718.77 L869.8 718.77" fill="none" stroke="#ece242" stroke-width="1.2" stroke-linejoin="round"/>
<circle cx="811" cy="718.77" r="3.1" fill="#ece242"/>
<circle cx="943.3" cy="716.29" r="3.1" fill="#ece242"/>
<path d="M1074.13 716.29 L1090.3 717.53 L1105 718.77" fill="none" stroke="#ece242" stroke-width="1.2" stroke-linejoin="round"/>
<circle cx="1134.4" cy="718.77" r="3.1" fill="#ece242"/>
<circle cx="1149.1" cy="716.29" r="3.1" fill="#ece242"/>
<path d="M855.1 708.85 L869.8 713.81 L884.5 718.03 L899.2 718.77" fill="none" stroke="#f2d489" stroke-width="1.2" stroke-linejoin="round"/>
<circle cx="825.7" cy="718.77" r="2.6" fill="#f2d489"/>
<path d="M943.3 716.29 L958 716.29" fill="none" stroke="#f2d489" stroke-width="1.2" stroke-linejoin="round"/>
<path d="M869.8 713.31 L884.5 718.03" fill="none" stroke="#e0831c" stroke-width="1.3" stroke-linejoin="round"/>
<circle cx="840.4" cy="718.77" r="2.6" fill="#e0831c"/>
<circle cx="913.9" cy="716.29" r="2.6" fill="#e0831c"/>
<path d="M1074.13 716.29 L1090.3 713.07 L1105 713.07" fill="none" stroke="#e0831c" stroke-width="1.3" stroke-linejoin="round"/>
<path d="M1134.4 718.77 L1149.1 718.77 L1163.8 715.55" fill="none" stroke="#e0831c" stroke-width="1.3" stroke-linejoin="round"/>
<path d="M737.5 718.77 L752.2 708.85 L766.9 718.77 L781.6 716.29 L796.3 718.77 L811 716.29 L825.7 718.77 L840.4 716.29" fill="none" stroke="#3f8f75" stroke-width="1.3" stroke-linejoin="round"/>
<circle cx="884.5" cy="718.77" r="2.6" fill="#3f8f75"/>
<circle cx="943.3" cy="706.37" r="2.6" fill="#3f8f75"/>
<path d="M1105 718.77 L1119.7 718.77 L1134.4 718.77 L1149.1 716.29" fill="none" stroke="#3f8f75" stroke-width="1.3" stroke-linejoin="round"/>
<path d="M737.5 706.37 L752.2 713.81 L766.9 713.81 L781.6 708.85 L796.3 711.33 L811 711.33 L825.7 718.77 L840.4 718.77 L855.1 716.29 L869.8 717.53" fill="none" stroke="#63d9c1" stroke-width="1.3" stroke-linejoin="round"/>
<path d="M899.2 711.33 L913.9 703.89 L928.6 713.81 L943.3 681.57 L958 713.81" fill="none" stroke="#63d9c1" stroke-width="1.3" stroke-linejoin="round"/>
<path d="M1074.13 707.61 L1090.3 715.05 L1099.12 717.53" fill="none" stroke="#63d9c1" stroke-width="1.3" stroke-linejoin="round"/>
<path d="M737.5 713.81 L752.2 691.49 L766.9 713.81 L781.6 715.05 L796.3 714.55 L811 716.29 L825.7 708.85 L840.4 716.29 L855.1 574.93 L869.8 718.77 L884.5 701.41 L899.2 713.81" fill="none" stroke="#f1c21b" stroke-width="1.4" stroke-linejoin="round"/>
<path d="M928.6 715.05 L943.3 703.89" fill="none" stroke="#f1c21b" stroke-width="1.4" stroke-linejoin="round"/>
<circle cx="943.3" cy="703.89" r="3.1" fill="#f1c21b"/>
<circle cx="1105" cy="708.85" r="3.1" fill="#f1c21b"/>
<path d="M737.5 718.77 L752.2 703.89 L766.9 713.81 L781.6 706.37 L796.3 711.33 L811 703.89 L825.7 718.77 L840.4 718.77 L855.1 698.93 L869.8 686.53 L884.5 706.37 L899.2 696.45 L913.9 698.93 L928.6 708.85 L943.3 691.49 L958 693.97" fill="none" stroke="#12a4e2" stroke-width="1.5" stroke-linejoin="round"/>
<path d="M1074.13 695.95 L1090.3 705.38 L1105 710.83 L1119.7 711.33 L1134.4 708.85 L1149.1 701.41 L1163.8 708.35" fill="none" stroke="#12a4e2" stroke-width="1.5" stroke-linejoin="round"/>
<circle cx="943.3" cy="691.49" r="2.6" fill="#12a4e2"/>
<circle cx="752.2" cy="718.77" r="2.6" fill="#e8eaf4"/>
<text x="737.5" y="702.37" font-size="9.6" fill="#555" text-anchor="middle" textLength="4.59" lengthAdjust="spacingAndGlyphs">6</text>
<text x="752.2" y="687.49" font-size="9.6" fill="#555" text-anchor="middle" textLength="9.18" lengthAdjust="spacingAndGlyphs">12</text>
<text x="752.2" y="697.91" font-size="9.6" fill="#555" text-anchor="middle" textLength="4.59" lengthAdjust="spacingAndGlyphs">7</text>
<text x="766.9" y="706.09" font-size="9.6" fill="#555" text-anchor="middle" textLength="4.59" lengthAdjust="spacingAndGlyphs">3</text>
<text x="781.6" y="702.37" font-size="9.6" fill="#555" text-anchor="middle" textLength="4.59" lengthAdjust="spacingAndGlyphs">6</text>
<text x="796.3" y="703.61" font-size="9.6" fill="#555" text-anchor="middle" textLength="4.59" lengthAdjust="spacingAndGlyphs">4</text>
<text x="811" y="698.65" font-size="9.6" fill="#555" text-anchor="middle" textLength="4.59" lengthAdjust="spacingAndGlyphs">7</text>
<text x="825.7" y="704.85" font-size="9.6" fill="#555" text-anchor="middle" textLength="4.59" lengthAdjust="spacingAndGlyphs">5</text>
<text x="840.4" y="709.31" font-size="9.6" fill="#555" text-anchor="middle" textLength="4.59" lengthAdjust="spacingAndGlyphs">2</text>
<text x="855.1" y="585.81" font-size="9.6" fill="#555" text-anchor="middle" textLength="9.18" lengthAdjust="spacingAndGlyphs">59</text>
<text x="855.1" y="691.21" font-size="9.6" fill="#555" text-anchor="middle" textLength="4.59" lengthAdjust="spacingAndGlyphs">9</text>
<text x="869.8" y="682.53" font-size="9.6" fill="#555" text-anchor="middle" textLength="9.18" lengthAdjust="spacingAndGlyphs">14</text>
<text x="884.5" y="697.41" font-size="9.6" fill="#555" text-anchor="middle" textLength="4.59" lengthAdjust="spacingAndGlyphs">8</text>
<text x="899.2" y="691.21" font-size="9.6" fill="#555" text-anchor="middle" textLength="9.18" lengthAdjust="spacingAndGlyphs">10</text>
<text x="913.9" y="693.69" font-size="9.6" fill="#555" text-anchor="middle" textLength="4.59" lengthAdjust="spacingAndGlyphs">9</text>
<text x="943.3" y="677.57" font-size="9.6" fill="#555" text-anchor="middle" textLength="9.18" lengthAdjust="spacingAndGlyphs">16</text>
<text x="943.3" y="686.25" font-size="9.6" fill="#555" text-anchor="middle" textLength="9.18" lengthAdjust="spacingAndGlyphs">12</text>
<text x="737.5" y="710.8" font-size="9.6" fill="#555" text-anchor="middle" textLength="4.59" lengthAdjust="spacingAndGlyphs">1</text>
<text x="737.5" y="717.25" font-size="9.6" fill="#555" text-anchor="middle" textLength="4.59" lengthAdjust="spacingAndGlyphs">3</text>
<text x="752.2" y="708.32" font-size="9.6" fill="#555" text-anchor="middle" textLength="4.59" lengthAdjust="spacingAndGlyphs">3</text>
<text x="752.2" y="714.27" font-size="9.6" fill="#555" text-anchor="middle" textLength="4.59" lengthAdjust="spacingAndGlyphs">3</text>
<text x="766.9" y="717.25" font-size="9.6" fill="#555" text-anchor="middle" textLength="4.59" lengthAdjust="spacingAndGlyphs">1</text>
<text x="781.6" y="708.32" font-size="9.6" fill="#555" text-anchor="middle" textLength="4.59" lengthAdjust="spacingAndGlyphs">2</text>
<text x="781.6" y="717.25" font-size="9.6" fill="#555" text-anchor="middle" textLength="4.59" lengthAdjust="spacingAndGlyphs">5</text>
<text x="796.3" y="715.27" font-size="9.6" fill="#555" text-anchor="middle" textLength="4.59" lengthAdjust="spacingAndGlyphs">2</text>
<text x="811" y="706.83" font-size="9.6" fill="#555" text-anchor="middle" textLength="4.59" lengthAdjust="spacingAndGlyphs">4</text>
<text x="811" y="714.27" font-size="9.6" fill="#555" text-anchor="middle" textLength="4.59" lengthAdjust="spacingAndGlyphs">3</text>
<text x="825.7" y="711.79" font-size="9.6" fill="#555" text-anchor="middle" textLength="4.59" lengthAdjust="spacingAndGlyphs">1</text>
<text x="825.7" y="717.25" font-size="9.6" fill="#555" text-anchor="middle" textLength="4.59" lengthAdjust="spacingAndGlyphs">1</text>
<text x="855.1" y="704.35" font-size="9.6" fill="#555" text-anchor="middle" textLength="4.59" lengthAdjust="spacingAndGlyphs">5</text>
<text x="855.1" y="710.8" font-size="9.6" fill="#555" text-anchor="middle" textLength="4.59" lengthAdjust="spacingAndGlyphs">2</text>
<text x="855.1" y="716.75" font-size="9.6" fill="#555" text-anchor="middle" textLength="4.59" lengthAdjust="spacingAndGlyphs">2</text>
<text x="869.8" y="703.61" font-size="9.6" fill="#555" text-anchor="middle" textLength="4.59" lengthAdjust="spacingAndGlyphs">8</text>
<text x="869.8" y="710.8" font-size="9.6" fill="#555" text-anchor="middle" textLength="4.59" lengthAdjust="spacingAndGlyphs">1</text>
<text x="869.8" y="717.25" font-size="9.6" fill="#555" text-anchor="middle" textLength="4.59" lengthAdjust="spacingAndGlyphs">1</text>
<text x="884.5" y="714.77" font-size="9.6" fill="#555" text-anchor="middle" textLength="4.59" lengthAdjust="spacingAndGlyphs">6</text>
<text x="899.2" y="706.34" font-size="9.6" fill="#555" text-anchor="middle" textLength="4.59" lengthAdjust="spacingAndGlyphs">4</text>
<text x="899.2" y="711.79" font-size="9.6" fill="#555" text-anchor="middle" textLength="4.59" lengthAdjust="spacingAndGlyphs">1</text>
<text x="899.2" y="717.25" font-size="9.6" fill="#555" text-anchor="middle" textLength="4.59" lengthAdjust="spacingAndGlyphs">3</text>
<text x="913.9" y="707.33" font-size="9.6" fill="#555" text-anchor="middle" textLength="4.59" lengthAdjust="spacingAndGlyphs">3</text>
<text x="913.9" y="711.55" font-size="9.6" fill="#555" text-anchor="middle" textLength="4.59" lengthAdjust="spacingAndGlyphs">7</text>
<text x="928.6" y="707.33" font-size="9.6" fill="#555" text-anchor="middle" textLength="4.59" lengthAdjust="spacingAndGlyphs">3</text>
<text x="928.6" y="714.77" font-size="9.6" fill="#555" text-anchor="middle" textLength="4.59" lengthAdjust="spacingAndGlyphs">6</text>
<text x="943.3" y="699.89" font-size="9.6" fill="#555" text-anchor="middle" textLength="4.59" lengthAdjust="spacingAndGlyphs">7</text>
<text x="943.3" y="704.85" font-size="9.6" fill="#555" text-anchor="middle" textLength="4.59" lengthAdjust="spacingAndGlyphs">2</text>
<text x="937.42" y="716.51" font-size="9.6" fill="#555" text-anchor="middle" textLength="4.59" lengthAdjust="spacingAndGlyphs">2</text>
<text x="958" y="716.51" font-size="9.6" fill="#555" text-anchor="middle" textLength="4.59" lengthAdjust="spacingAndGlyphs">2</text>
<text x="1060.9" y="676.08" font-size="9.6" fill="#555" text-anchor="middle" textLength="9.18" lengthAdjust="spacingAndGlyphs">17</text>
<text x="1075.6" y="692.95" font-size="9.6" fill="#555" text-anchor="middle" textLength="4.59" lengthAdjust="spacingAndGlyphs">0</text>
<text x="1090.3" y="700.88" font-size="9.6" fill="#555" text-anchor="middle" textLength="4.59" lengthAdjust="spacingAndGlyphs">6</text>
<text x="1090.3" y="708.82" font-size="9.6" fill="#555" text-anchor="middle" textLength="4.59" lengthAdjust="spacingAndGlyphs">2</text>
<text x="1090.3" y="716.75" font-size="9.6" fill="#555" text-anchor="middle" textLength="4.59" lengthAdjust="spacingAndGlyphs">3</text>
<text x="1105" y="706.09" font-size="9.6" fill="#555" text-anchor="middle" textLength="4.59" lengthAdjust="spacingAndGlyphs">4</text>
<text x="1105" y="710.8" font-size="9.6" fill="#555" text-anchor="middle" textLength="4.59" lengthAdjust="spacingAndGlyphs">1</text>
<text x="1105" y="716.75" font-size="9.6" fill="#555" text-anchor="middle" textLength="4.59" lengthAdjust="spacingAndGlyphs">5</text>
<text x="1119.7" y="706.59" font-size="9.6" fill="#555" text-anchor="middle" textLength="4.59" lengthAdjust="spacingAndGlyphs">4</text>
<text x="1119.7" y="713.28" font-size="9.6" fill="#555" text-anchor="middle" textLength="4.59" lengthAdjust="spacingAndGlyphs">1</text>
<text x="1134.4" y="703.86" font-size="9.6" fill="#555" text-anchor="middle" textLength="4.59" lengthAdjust="spacingAndGlyphs">5</text>
<text x="1134.4" y="708.32" font-size="9.6" fill="#555" text-anchor="middle" textLength="4.59" lengthAdjust="spacingAndGlyphs">2</text>
<text x="1149.1" y="696.91" font-size="9.6" fill="#555" text-anchor="middle" textLength="4.59" lengthAdjust="spacingAndGlyphs">8</text>
<text x="1149.1" y="710.31" font-size="9.6" fill="#555" text-anchor="middle" textLength="4.59" lengthAdjust="spacingAndGlyphs">1</text>
<text x="1149.1" y="716.75" font-size="9.6" fill="#555" text-anchor="middle" textLength="4.59" lengthAdjust="spacingAndGlyphs">1</text>
<text x="1143.22" y="714.27" font-size="9.6" fill="#555" text-anchor="middle" textLength="4.59" lengthAdjust="spacingAndGlyphs">2</text>
<text x="1163.8" y="711.3" font-size="9.6" fill="#555" text-anchor="middle" textLength="4.59" lengthAdjust="spacingAndGlyphs">1</text>
<text x="1163.8" y="716.75" font-size="9.6" fill="#555" text-anchor="middle" textLength="4.59" lengthAdjust="spacingAndGlyphs">5</text>
<text x="1078.54" y="714.77" font-size="9.6" fill="#555" text-anchor="middle" textLength="4.59" lengthAdjust="spacingAndGlyphs">2</text>
<line x1="943.25" y1="571" x2="943.25" y2="721.5" stroke="#8a8a8a" stroke-width="1"/>
<rect x="726" y="779.5" width="444.5" height="5.5" fill="#f0f0f0"/>
<rect x="1058" y="779.5" width="42" height="5.5" fill="#c6c6c6"/>
<circle cx="714.25" cy="796.25" r="3.4" fill="#12a4e2"/>
<text x="719.5" y="799.6" font-size="9.6" fill="#555" textLength="38.5" lengthAdjust="spacingAndGlyphs">Day - 0-7</text>
<circle cx="767" cy="796.25" r="3.4" fill="#63d9c1"/>
<text x="772.5" y="799.6" font-size="9.6" fill="#555" textLength="38" lengthAdjust="spacingAndGlyphs">Day 8-14</text>
<circle cx="818.75" cy="796.25" r="3.4" fill="#f1c21b"/>
<text x="824.25" y="799.6" font-size="9.6" fill="#555" textLength="42" lengthAdjust="spacingAndGlyphs">Day 15-21</text>
<circle cx="875" cy="796.25" r="3.4" fill="#3f8f75"/>
<text x="880.5" y="799.6" font-size="9.6" fill="#555" textLength="43.25" lengthAdjust="spacingAndGlyphs">Day 22-28</text>
<circle cx="931.25" cy="796.25" r="3.4" fill="#e8eaf4"/>
<text x="937.5" y="799.6" font-size="9.6" fill="#555" textLength="43.25" lengthAdjust="spacingAndGlyphs">Day 29-35</text>
<circle cx="988.25" cy="796.25" r="3.4" fill="#f2d489"/>
<text x="994.5" y="799.6" font-size="9.6" fill="#555" textLength="43.25" lengthAdjust="spacingAndGlyphs">Day 36-42</text>
<circle cx="1044.5" cy="796.25" r="3.4" fill="#e0831c"/>
<text x="1050.5" y="799.6" font-size="9.6" fill="#555" textLength="43.25" lengthAdjust="spacingAndGlyphs">Day 43-49</text>
<circle cx="1101.25" cy="796.25" r="3.4" fill="#ece242"/>
<text x="1107.5" y="799.6" font-size="9.6" fill="#555" textLength="43.25" lengthAdjust="spacingAndGlyphs">Day 50-56</text>
<path d="M1166 793 L1169.6 796.25 L1166 799.5 Z" fill="#222"/>
<rect x="955.5" y="672" width="119" height="140" fill="#333333"/>
<path d="M955.6 677 L949.6 683 L955.6 689 Z" fill="#333333"/>
<text x="970" y="699.4" font-size="12" fill="#e8e8e8" font-weight="700" textLength="67" lengthAdjust="spacingAndGlyphs">28/06/2021</text>
<circle cx="974.5" cy="714.5" r="5" fill="#12a4e2"/>
<text x="1037" y="718.8" font-size="12" fill="#c6c6c6" text-anchor="end" textLength="45.75" lengthAdjust="spacingAndGlyphs">Day - 0-7</text>
<text x="1048.75" y="718.8" font-size="12" fill="#ffffff" font-weight="700" textLength="11.2" lengthAdjust="spacingAndGlyphs">12</text>
<circle cx="974.5" cy="733.5" r="5" fill="#63d9c1"/>
<text x="1037" y="737.8" font-size="12" fill="#c6c6c6" text-anchor="end" textLength="44.5" lengthAdjust="spacingAndGlyphs">Day 8-14</text>
<text x="1048.75" y="737.8" font-size="12" fill="#ffffff" font-weight="700" textLength="11.2" lengthAdjust="spacingAndGlyphs">16</text>
<circle cx="974.5" cy="752.5" r="5" fill="#f1c21b"/>
<text x="1037" y="756.8" font-size="12" fill="#c6c6c6" text-anchor="end" textLength="50.75" lengthAdjust="spacingAndGlyphs">Day 15-21</text>
<text x="1048.75" y="756.8" font-size="12" fill="#ffffff" font-weight="700" textLength="5.6" lengthAdjust="spacingAndGlyphs">7</text>
<circle cx="974.5" cy="771.5" r="5" fill="#3f8f75"/>
<text x="1037" y="775.8" font-size="12" fill="#c6c6c6" text-anchor="end" textLength="50.75" lengthAdjust="spacingAndGlyphs">Day 22-28</text>
<text x="1048.75" y="775.8" font-size="12" fill="#ffffff" font-weight="700" textLength="5.6" lengthAdjust="spacingAndGlyphs">6</text>
<circle cx="974.5" cy="790.5" r="5" fill="#f2d489"/>
<text x="1037" y="794.8" font-size="12" fill="#c6c6c6" text-anchor="end" textLength="50.75" lengthAdjust="spacingAndGlyphs">Day 36-42</text>
<text x="1048.75" y="794.8" font-size="12" fill="#ffffff" font-weight="700" textLength="5.6" lengthAdjust="spacingAndGlyphs">2</text>
<circle cx="974.5" cy="809.5" r="5" fill="#ece242"/>
<text x="1037" y="813.8" font-size="12" fill="#c6c6c6" text-anchor="end" textLength="50.75" lengthAdjust="spacingAndGlyphs">Day 50-56</text>
<text x="1048.75" y="813.8" font-size="12" fill="#ffffff" font-weight="700" textLength="5.6" lengthAdjust="spacingAndGlyphs">2</text>
</g>
<rect x="0" y="0" width="224.5" height="840" fill="#ffffff"/>
<line x1="224.5" y1="0" x2="224.5" y2="840" stroke="#d9d9d9" stroke-width="1"/>
<rect x="214" y="453" width="10" height="387" fill="#c8c8c8"/>
<text x="19.5" y="32.5" font-size="18.2" fill="#252423" textLength="51.5" lengthAdjust="spacingAndGlyphs" stroke="#252423" stroke-width="0.55">Pages</text>
<path d="M199 12.2 L190 22 L199 31.8 M208.6 12.2 L199.6 22 L208.6 31.8" fill="none" stroke="#605e5c" stroke-width="1.2"/>
<rect x="0" y="251.2" width="214" height="49.3" fill="#edebe9"/>
<rect x="1.4" y="261" width="4.7" height="29.5" fill="#f2c811" rx="2.3"/>
<text x="19.4" y="79.85" font-size="17.9" fill="#2f2e2d" textLength="178" lengthAdjust="spacingAndGlyphs">Account Receivable A...</text>
<text x="19.4" y="129.85" font-size="17.9" fill="#2f2e2d" textLength="132.5" lengthAdjust="spacingAndGlyphs">Payment Analysis</text>
<text x="19.4" y="179.85" font-size="17.9" fill="#2f2e2d" textLength="181" lengthAdjust="spacingAndGlyphs">Booking and Stay Patt...</text>
<text x="19.4" y="229.85" font-size="17.9" fill="#2f2e2d" textLength="183" lengthAdjust="spacingAndGlyphs">Allotment Materializat...</text>
<text x="19.4" y="279.85" font-size="17.9" fill="#252423" textLength="94.75" lengthAdjust="spacingAndGlyphs" stroke="#252423" stroke-width="0.55">Pace Report</text>
<text x="19.4" y="329.85" font-size="17.9" fill="#2f2e2d" textLength="153.5" lengthAdjust="spacingAndGlyphs">Occupancy Forecast</text>
<text x="19.4" y="379.85" font-size="17.9" fill="#2f2e2d" textLength="181" lengthAdjust="spacingAndGlyphs">Occupancy Forecast b...</text>
<text x="19.4" y="429.85" font-size="17.9" fill="#2f2e2d" textLength="129" lengthAdjust="spacingAndGlyphs">N Week Forecast</text>
<text x="19.4" y="479.85" font-size="17.9" fill="#2f2e2d" textLength="138" lengthAdjust="spacingAndGlyphs">N Month Forecast</text>
<text x="19.4" y="529.85" font-size="17.9" fill="#2f2e2d" textLength="168" lengthAdjust="spacingAndGlyphs">Cancellations Analysis</text>
<text x="19.4" y="579.85" font-size="17.9" fill="#2f2e2d" textLength="136.5" lengthAdjust="spacingAndGlyphs">No Show Analysis</text>
<text x="19.4" y="629.85" font-size="17.9" fill="#2f2e2d" textLength="162" lengthAdjust="spacingAndGlyphs">C&amp;B-Market Analysis</text>
<text x="19.4" y="679.85" font-size="17.9" fill="#2f2e2d" textLength="160.5" lengthAdjust="spacingAndGlyphs">C&amp;B-Source Analysis</text>
<text x="19.4" y="729.85" font-size="17.9" fill="#2f2e2d" textLength="176.5" lengthAdjust="spacingAndGlyphs">C&amp;B-Event Type Anal...</text>
<text x="19.4" y="779.85" font-size="17.9" fill="#2f2e2d" textLength="139.5" lengthAdjust="spacingAndGlyphs">C&amp;B-Lost Analysis</text>
<text x="19.4" y="829.85" font-size="17.9" fill="#2f2e2d" textLength="179.5" lengthAdjust="spacingAndGlyphs">Group &amp; Block Analysis</text>
<rect x="225" y="0" width="1571" height="47" fill="#f3f2f1"/>
<line x1="225" y1="46.5" x2="1796" y2="46.5" stroke="#e3e1df" stroke-width="1"/>
<path d="M238 12.9 L247 12.9 L252.4 18.3 L252.4 31 L238 31 Z M247 12.9 L247 18.3 L252.4 18.3" fill="none" stroke="#323130" stroke-width="1.5" stroke-linejoin="round"/>
<text x="266" y="29.1" font-size="18" fill="#2f2e2d" textLength="25" lengthAdjust="spacingAndGlyphs">File</text>
<path d="M302.3 18.2 L309.1 25 L315.9 18.2" fill="none" stroke="#484644" stroke-width="1.2"/>
<line x1="336.6" y1="18" x2="336.6" y2="27.4" stroke="#323130" stroke-width="1.5"/>
<path d="M338 22.7 L355.5 22.7 M350 17.4 L355.6 22.7 L350 28" fill="none" stroke="#2b7cd3" stroke-width="1.5"/>
<text x="367" y="29.1" font-size="18" fill="#2f2e2d" textLength="48.4" lengthAdjust="spacingAndGlyphs">Export</text>
<path d="M426.4 18.2 L433.3 25 L440.2 18.2" fill="none" stroke="#484644" stroke-width="1.2"/>
<path d="M461.8 18.5 L461.8 29 L476 29" fill="none" stroke="#323130" stroke-width="1.6"/>
<path d="M465 25.5 C465.5 20 469 17.3 473.3 17.2 L473.3 13 L480 19.3 L473.3 25.6 L473.3 21.4 C470 21.3 467 22.3 465 25.5 Z" fill="#4aa0e6" stroke="#1e6fbf" stroke-width="1.1" stroke-linejoin="round"/>
<text x="491.6" y="29.1" font-size="18" fill="#2f2e2d" textLength="42.4" lengthAdjust="spacingAndGlyphs">Share</text>
<path d="M566.4 19.6 L573.4 19.6 L573.4 25 C573.4 27.4 571.8 28.8 569.6 28.8 L566.4 28.8 Z" fill="#f0f1fb" stroke="#5b64d0" stroke-width="1.1" stroke-linejoin="round"/>
<circle cx="570.6" cy="15.7" r="1.9" fill="#f6f6fd" stroke="#5b64d0" stroke-width="1.1"/>
<path d="M557.6 19.6 L569.6 19.6 L569.6 26.6 C569.6 29.8 567 32 563.7 32 C560.3 32 557.6 29.8 557.6 26.6 Z" fill="#e6e8f8" stroke="#4b53bc" stroke-width="1.2"/>
<circle cx="564.3" cy="15.1" r="3" fill="#f2f3fc" stroke="#4b53bc" stroke-width="1.2"/>
<rect x="554" y="15.6" width="11.8" height="11.8" fill="#4b53bc" rx="1.4"/>
<path d="M556.8 18.9 L563 18.9 M559.9 18.9 L559.9 25.2" fill="none" stroke="#ffffff" stroke-width="1.5"/>
<text x="584.7" y="29.1" font-size="18" fill="#2f2e2d" textLength="106.6" lengthAdjust="spacingAndGlyphs">Chat in Teams</text>
<path d="M711.6 14.6 L730.4 14.6 L730.4 27.4 L711.6 27.4 Z M711.6 15 L721 22.4 L730.4 15" fill="none" stroke="#484644" stroke-width="1.4" stroke-linejoin="round"/>
<text x="741.8" y="29.1" font-size="18" fill="#2f2e2d" textLength="73.8" lengthAdjust="spacingAndGlyphs">Subscribe</text>
<path d="M837 30.6 L838.6 25 L851.5 13.3 C852.6 12.3 854 12.4 855 13.5 C856.2 14.7 856.2 16 855.2 17 L842.4 29 Z" fill="#f2da78" stroke="#3b3a39" stroke-width="1.3" stroke-linejoin="round"/>
<path d="M850 14.7 L851.5 13.3 C852.6 12.3 854 12.4 855 13.5 C856.2 14.7 856.2 16 855.2 17 L853.8 18.4 Z" fill="#cfa3dd" stroke="#3b3a39" stroke-width="1.1" stroke-linejoin="round"/>
<path d="M837 30.6 L838 27.2 L840.3 29.6 Z" fill="#3b3a39"/>
<text x="867" y="29.1" font-size="18" fill="#2f2e2d" textLength="28" lengthAdjust="spacingAndGlyphs">Edit</text>
<circle cx="920.2" cy="21.8" r="1.35" fill="#201f1e"/>
<circle cx="928" cy="21.8" r="1.35" fill="#201f1e"/>
<circle cx="935.6" cy="21.8" r="1.35" fill="#201f1e"/>
<path d="M1550.6 12.8 L1545.2 18.9 L1552.6 19.8 M1546.2 19.2 A8.4 8.4 0 1 1 1548.2 29" fill="none" stroke="#a9a7a5" stroke-width="1.3" stroke-linecap="round" stroke-linejoin="round"/>
<path d="M1593.2 12.9 L1604.8 12.9 L1604.8 30.8 L1599 26.4 L1593.2 30.8 Z" fill="none" stroke="#323130" stroke-width="1.6" stroke-linejoin="miter"/>
<path d="M1619.2 18 L1626.3 24.8 L1633.4 18" fill="none" stroke="#484644" stroke-width="1.2"/>
<rect x="1655" y="15" width="18.2" height="13.4" fill="none" stroke="#323130" stroke-width="1.8" rx="1.6"/>
<path d="M1684.2 18 L1691.3 24.8 L1698.4 18" fill="none" stroke="#484644" stroke-width="1.2"/>
<line x1="1719.6" y1="5.2" x2="1719.6" y2="39.7" stroke="#c8c6c4" stroke-width="1"/>
<path d="M1748.6 12.7 A9.4 9.4 0 1 1 1741.9 17.3 M1744.2 12.1 L1748.9 12.9 L1747.5 17.4" fill="none" stroke="#323130" stroke-width="1.3" stroke-linecap="round" stroke-linejoin="round"/>
<path d="M1782 14 L1800 14 L1800 26.4 L1787.6 26.4 L1783.8 30 L1783.8 26.4 L1782 26.4 Z" fill="none" stroke="#323130" stroke-width="1.5" stroke-linejoin="round"/>
<rect x="225" y="838.5" width="1571" height="1.5" fill="#ececec"/>
<line x1="225" y1="838.5" x2="1796" y2="838.5" stroke="#d4d4d4" stroke-width="1"/>
</svg>
</body></html>
